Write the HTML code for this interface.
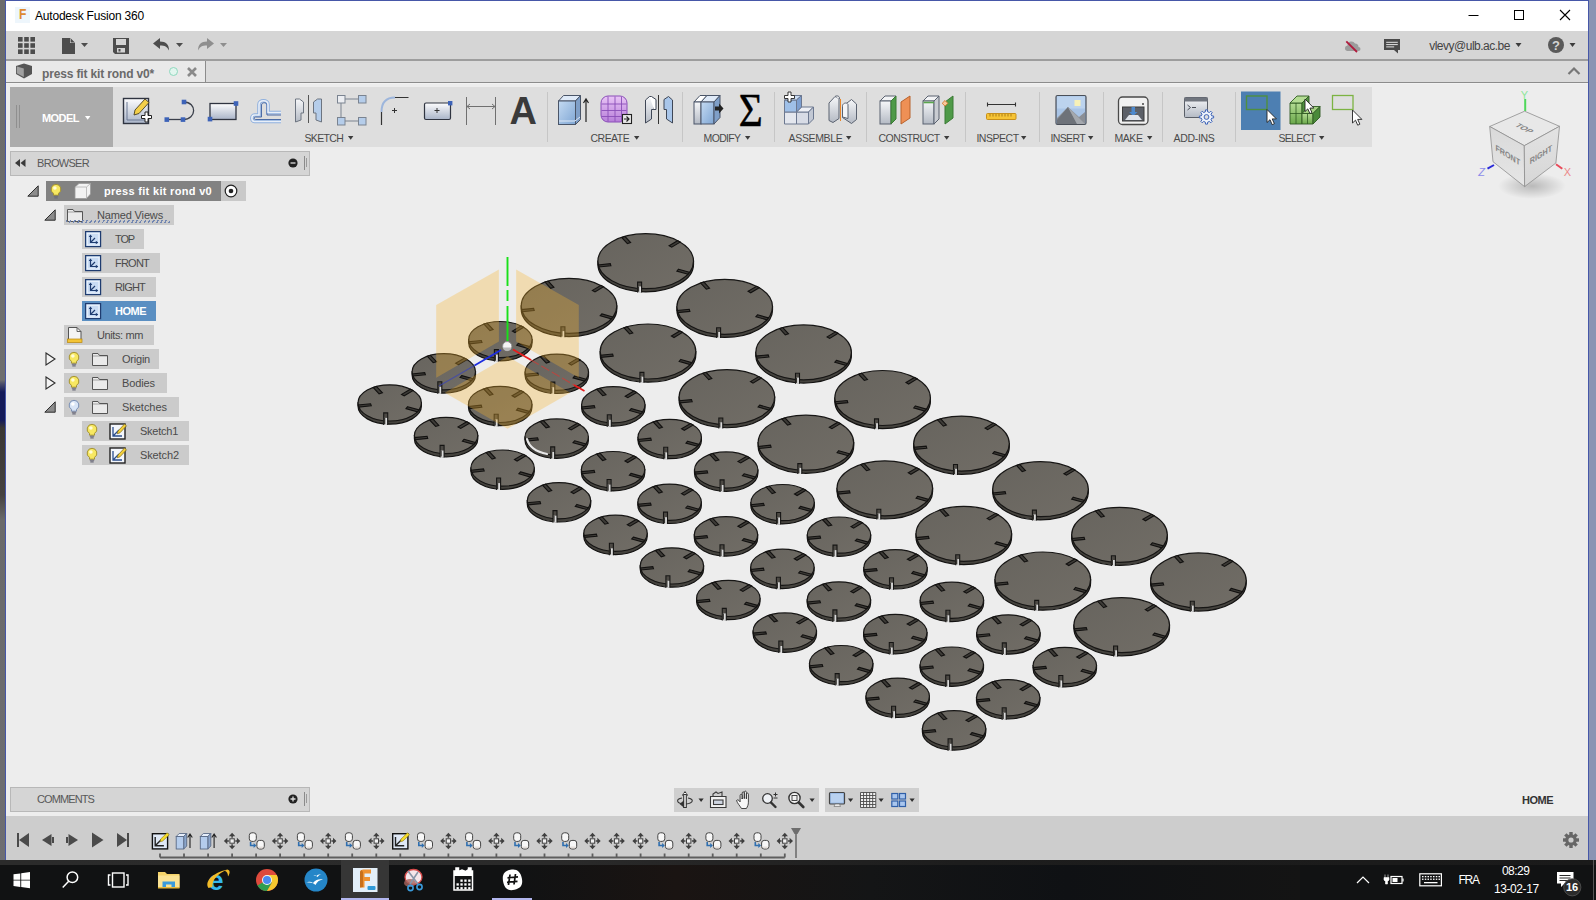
<!DOCTYPE html><html><head><meta charset="utf-8"><title>Autodesk Fusion 360</title><style>
*{margin:0;padding:0;box-sizing:border-box}
html,body{width:1596px;height:900px;overflow:hidden}
body{background:#6f6f6f;font-family:"Liberation Sans",sans-serif;position:relative}
.a{position:absolute}
.t{position:absolute;white-space:nowrap;line-height:1}
svg{position:absolute;overflow:visible}
</style></head><body>
<div class="a" style="left:0;top:0;width:5px;height:860px;background:linear-gradient(#6b6b6b 0,#6f6f6f 380px,#4a4d6a 384px,#141a5a 392px,#141a5a 420px,#3a3734 428px,#454240 495px,#6a6a6a 520px,#6e6e72 860px)"></div>
<div class="a" style="left:1589px;top:0;width:7px;height:860px;background:#8a94b3"></div>
<div class="a" style="left:5px;top:0;width:1584px;height:860px;background:#ededed;border:1px solid #4657a8;border-bottom:none"></div>
<div class="a" style="left:6px;top:1px;width:1582px;height:30px;background:#fff"></div>
<div class="t" style="left:35px;top:10px;font-size:12px;color:#000;letter-spacing:-0.2px">Autodesk Fusion 360</div>
<div class="a" style="left:15px;top:7px;width:15px;height:16px;background:#eef6fc"></div>
<div class="t" style="left:18.500px;top:6px;font-size:15.500px;font-weight:bold;color:#dd8a30;transform:scaleX(0.78);transform-origin:0 0">F</div>
<svg style="left:1460px;top:5px" width="120" height="22"><path d="M8.5 10.5h10" stroke="#000" fill="none"/><rect x="54.5" y="5.5" width="9" height="9" stroke="#000" fill="none"/><path d="M100 5l10 10M110 5l-10 10" stroke="#000" stroke-width="1.1" fill="none"/></svg>
<div class="a" style="left:6px;top:31px;width:1582px;height:28px;background:#d5d5d5"></div>
<div class="a" style="left:6px;top:59px;width:1582px;height:2px;background:#9d9d9d"></div>
<svg style="left:18px;top:37px" width="18" height="18" fill="#4d4d4d"><rect x="0.0" y="0.0" width="4.6" height="4.6"/><rect x="0.0" y="6.2" width="4.6" height="4.6"/><rect x="0.0" y="12.4" width="4.6" height="4.6"/><rect x="6.2" y="0.0" width="4.6" height="4.6"/><rect x="6.2" y="6.2" width="4.6" height="4.6"/><rect x="6.2" y="12.4" width="4.6" height="4.6"/><rect x="12.4" y="0.0" width="4.6" height="4.6"/><rect x="12.4" y="6.2" width="4.6" height="4.6"/><rect x="12.4" y="12.4" width="4.6" height="4.6"/></svg>
<svg style="left:62px;top:37px" width="30" height="18" fill="#4d4d4d"><path d="M0 1h8l5 5v11H0z"/><path d="M8 1v5h5" fill="#d5d5d5"/><path d="M8.6 1.2l4.2 4.4h-4.2z" fill="#4d4d4d"/><path d="M19 6h7l-3.5 4z"/></svg>
<svg style="left:113px;top:38px" width="17" height="17"><path d="M0 0h16v16H2l-2-2z" fill="#4d4d4d"/><rect x="3" y="1" width="10" height="6" fill="#d5d5d5"/><rect x="4" y="10" width="8" height="4.5" fill="#d5d5d5"/><rect x="5.5" y="11" width="2" height="2.5" fill="#4d4d4d"/></svg>
<svg style="left:152px;top:37px" width="34" height="18" fill="#4d4d4d"><path d="M1 6.5l7-5.5v3.5c6 0 9 3 9 9c-2-4-4-5-9-5v3.500z"/><path d="M24 6h7l-3.500 4z"/></svg>
<svg style="left:196px;top:37px" width="34" height="18" fill="#8e8e8e"><path d="M18 6.5l-7-5.5v3.5c-6 0-9 3-9 9c2-4 4-5 9-5v3.500z"/><path d="M24 6h7l-3.500 4z"/></svg>
<svg style="left:1342px;top:37px" width="22" height="18"><path d="M5 14a2.800 2.800 0 0 1 0.500-5.500a4 4 0 0 1 7.500-2a3.500 3.500 0 0 1 3.500 3.500a2 2 0 0 1 0 4z" fill="#9c9c9c"/><path d="M4.300 4.300l10.700 10.700" stroke="#b01a3c" stroke-width="1.800"/></svg>
<svg style="left:1384px;top:39px" width="17" height="16"><path d="M0 0h16v11h-2v3.500l-4-3.500h-10z" fill="#4a4a4a"/><path d="M2.200 3.300h11.600M2.200 5.600h11.600M2.200 7.900h8" stroke="#e4e4e4" stroke-width="1"/></svg>
<div class="t" style="left:1429.2px;top:40px;font-size:12px;color:#444;letter-spacing:-0.50px;">vlevy@ulb.ac.be</div>
<svg style="left:1515px;top:42px" width="10" height="8"><path d="M0.500 1h6l-3 4z" fill="#3c3c3c"/></svg>
<div class="a" style="left:1548px;top:37px;width:16px;height:16px;border-radius:8px;background:#5a5a5a"></div>
<div class="t" style="left:1552px;top:39px;font-size:13px;font-weight:bold;color:#d5d5d5">?</div>
<svg style="left:1568.500px;top:42px" width="10" height="8"><path d="M0.500 1h6l-3 4z" fill="#3c3c3c"/></svg>
<div class="a" style="left:6px;top:61px;width:1582px;height:22px;background:#dbdbdb"></div>
<div class="a" style="left:6px;top:82px;width:1582px;height:1px;background:#8c8c8c"></div>
<div class="a" style="left:6px;top:83px;width:1582px;height:1px;background:#f2f2f2"></div>
<div class="a" style="left:6px;top:61px;width:199px;height:21px;background:#e9e9e9"></div>
<div class="a" style="left:204.500px;top:61px;width:1.600px;height:21px;background:#8c8c8c"></div>
<svg style="left:16px;top:63px" width="17" height="17"><path d="M0 3l8-2.500 8 2.500v8l-8 4.500-8-4.500z" fill="#555"/><path d="M0.800 3.600l7 2v8.400l-7-3.800z" fill="#a0a0a0"/></svg>
<div class="t" style="left:42px;top:68px;font-size:12px;font-weight:bold;color:#6a6a6a;letter-spacing:-0.15px">press fit kit rond v0*</div>
<div class="a" style="left:169px;top:67px;width:9px;height:9px;border-radius:5px;border:1.500px solid #8fd8be;background:#e2f5ee"></div>
<svg style="left:187px;top:67px" width="10" height="10"><path d="M1 1l8 8M9 1l-8 8" stroke="#8a8a8a" stroke-width="2.600"/></svg>
<svg style="left:1567px;top:66px" width="14" height="10"><path d="M1.500 8l5.500-5.500 5.500 5.500" stroke="#777" stroke-width="2.200" fill="none"/></svg>
<svg style="left:0;top:0" width="1596" height="900" viewBox="0 0 1596 900">
<defs><linearGradient id="df" x1="0" y1="0" x2="1" y2="1"><stop offset="0" stop-color="#67645e"/><stop offset="1" stop-color="#716d66"/></linearGradient></defs>
<path d="M597.9 261.2v3.2a47.8 27.5 0 0 0 95.6 0v-3.2z" fill="#45433e" stroke="#131211" stroke-width="1.2"/><ellipse cx="645.7" cy="261.2" rx="47.8" ry="27.5" fill="url(#df)" stroke="#171615" stroke-width="1.2"/><path d="M678.5 269.2 L689.5 272.3 L687.9 274.2 L676.9 271.1z" fill="#3d3b37" stroke="#121110" stroke-width="1.1"/><path d="M610.9 265.8 L598.9 267.0 L598.3 264.9 L610.3 263.7z" fill="#3d3b37" stroke="#121110" stroke-width="1.1"/><path d="M627.4 243.6 L621.7 237.4 L624.9 236.4 L630.6 242.6z" fill="#3d3b37" stroke="#121110" stroke-width="1.1"/><path d="M669.1 245.7 L677.6 240.7 L680.2 242.1 L671.7 247.2z" fill="#3d3b37" stroke="#121110" stroke-width="1.1"/><path d="M637.6 292.5V282.1H641.6V292.5z" fill="#dcdcdc" stroke="none"/><path d="M637.6 286.4V282.1H641.6V286.4z" fill="#4c4944"/><path d="M637.6 292.5V282.1H641.6V292.5" fill="none" stroke="#151413" stroke-width="1.1"/><path d="M638.5 286.4V291.7" stroke="#34322e" stroke-width="1.4"/>
<path d="M676.9 306.8v3.2a47.8 27.5 0 0 0 95.6 0v-3.2z" fill="#45433e" stroke="#131211" stroke-width="1.2"/><ellipse cx="724.7" cy="306.8" rx="47.8" ry="27.5" fill="url(#df)" stroke="#171615" stroke-width="1.2"/><path d="M757.5 314.8 L768.4 317.9 L766.8 319.8 L755.9 316.7z" fill="#3d3b37" stroke="#121110" stroke-width="1.1"/><path d="M689.9 311.4 L677.9 312.6 L677.3 310.5 L689.3 309.3z" fill="#3d3b37" stroke="#121110" stroke-width="1.1"/><path d="M706.3 289.2 L700.6 283.0 L703.8 282.0 L709.5 288.2z" fill="#3d3b37" stroke="#121110" stroke-width="1.1"/><path d="M748.1 291.3 L756.6 286.3 L759.2 287.7 L750.7 292.8z" fill="#3d3b37" stroke="#121110" stroke-width="1.1"/><path d="M716.6 338.1V327.7H720.6V338.1z" fill="#dcdcdc" stroke="none"/><path d="M716.6 332.0V327.7H720.6V332.0z" fill="#4c4944"/><path d="M716.6 338.1V327.7H720.6V338.1" fill="none" stroke="#151413" stroke-width="1.1"/><path d="M717.5 332.0V337.3" stroke="#34322e" stroke-width="1.4"/>
<path d="M755.8 352.4v3.2a47.8 27.5 0 0 0 95.6 0v-3.2z" fill="#45433e" stroke="#131211" stroke-width="1.2"/><ellipse cx="803.6" cy="352.4" rx="47.8" ry="27.5" fill="url(#df)" stroke="#171615" stroke-width="1.2"/><path d="M836.4 360.4 L847.4 363.5 L845.8 365.4 L834.8 362.3z" fill="#3d3b37" stroke="#121110" stroke-width="1.1"/><path d="M768.9 357.0 L756.9 358.2 L756.2 356.1 L768.2 354.9z" fill="#3d3b37" stroke="#121110" stroke-width="1.1"/><path d="M785.3 334.8 L779.6 328.6 L782.8 327.6 L788.5 333.8z" fill="#3d3b37" stroke="#121110" stroke-width="1.1"/><path d="M827.1 336.9 L835.5 331.9 L838.1 333.3 L829.7 338.4z" fill="#3d3b37" stroke="#121110" stroke-width="1.1"/><path d="M795.5 383.7V373.3H799.5V383.7z" fill="#dcdcdc" stroke="none"/><path d="M795.5 377.6V373.3H799.5V377.6z" fill="#4c4944"/><path d="M795.5 383.7V373.3H799.5V383.7" fill="none" stroke="#151413" stroke-width="1.1"/><path d="M796.4 377.6V382.9" stroke="#34322e" stroke-width="1.4"/>
<path d="M834.8 398.0v3.2a47.8 27.5 0 0 0 95.6 0v-3.2z" fill="#45433e" stroke="#131211" stroke-width="1.2"/><ellipse cx="882.6" cy="398.0" rx="47.8" ry="27.5" fill="url(#df)" stroke="#171615" stroke-width="1.2"/><path d="M915.4 406.0 L926.3 409.1 L924.7 411.0 L913.8 407.9z" fill="#3d3b37" stroke="#121110" stroke-width="1.1"/><path d="M847.8 402.6 L835.8 403.8 L835.2 401.7 L847.2 400.5z" fill="#3d3b37" stroke="#121110" stroke-width="1.1"/><path d="M864.3 380.4 L858.5 374.2 L861.7 373.2 L867.5 379.4z" fill="#3d3b37" stroke="#121110" stroke-width="1.1"/><path d="M906.0 382.5 L914.5 377.5 L917.1 378.9 L908.6 384.0z" fill="#3d3b37" stroke="#121110" stroke-width="1.1"/><path d="M874.5 429.3V418.9H878.5V429.3z" fill="#dcdcdc" stroke="none"/><path d="M874.5 423.2V418.9H878.5V423.2z" fill="#4c4944"/><path d="M874.5 429.3V418.9H878.5V429.3" fill="none" stroke="#151413" stroke-width="1.1"/><path d="M875.4 423.2V428.5" stroke="#34322e" stroke-width="1.4"/>
<path d="M913.7 443.6v3.2a47.8 27.5 0 0 0 95.6 0v-3.2z" fill="#45433e" stroke="#131211" stroke-width="1.2"/><ellipse cx="961.5" cy="443.6" rx="47.8" ry="27.5" fill="url(#df)" stroke="#171615" stroke-width="1.2"/><path d="M994.3 451.6 L1005.3 454.7 L1003.7 456.6 L992.8 453.5z" fill="#3d3b37" stroke="#121110" stroke-width="1.1"/><path d="M926.8 448.2 L914.8 449.4 L914.2 447.3 L926.2 446.1z" fill="#3d3b37" stroke="#121110" stroke-width="1.1"/><path d="M943.2 426.0 L937.5 419.8 L940.7 418.8 L946.4 425.0z" fill="#3d3b37" stroke="#121110" stroke-width="1.1"/><path d="M985.0 428.1 L993.4 423.1 L996.1 424.5 L987.6 429.6z" fill="#3d3b37" stroke="#121110" stroke-width="1.1"/><path d="M953.5 474.9V464.5H957.5V474.9z" fill="#dcdcdc" stroke="none"/><path d="M953.5 468.8V464.5H957.5V468.8z" fill="#4c4944"/><path d="M953.5 474.9V464.5H957.5V474.9" fill="none" stroke="#151413" stroke-width="1.1"/><path d="M954.4 468.8V474.1" stroke="#34322e" stroke-width="1.4"/>
<path d="M992.7 489.2v3.2a47.8 27.5 0 0 0 95.6 0v-3.2z" fill="#45433e" stroke="#131211" stroke-width="1.2"/><ellipse cx="1040.5" cy="489.2" rx="47.8" ry="27.5" fill="url(#df)" stroke="#171615" stroke-width="1.2"/><path d="M1073.3 497.2 L1084.3 500.3 L1082.7 502.2 L1071.7 499.1z" fill="#3d3b37" stroke="#121110" stroke-width="1.1"/><path d="M1005.7 493.8 L993.7 495.0 L993.1 492.9 L1005.1 491.7z" fill="#3d3b37" stroke="#121110" stroke-width="1.1"/><path d="M1022.2 471.6 L1016.5 465.4 L1019.7 464.4 L1025.4 470.6z" fill="#3d3b37" stroke="#121110" stroke-width="1.1"/><path d="M1063.9 473.7 L1072.4 468.7 L1075.0 470.1 L1066.5 475.2z" fill="#3d3b37" stroke="#121110" stroke-width="1.1"/><path d="M1032.4 520.5V510.1H1036.4V520.5z" fill="#dcdcdc" stroke="none"/><path d="M1032.4 514.4V510.1H1036.4V514.4z" fill="#4c4944"/><path d="M1032.4 520.5V510.1H1036.4V520.5" fill="none" stroke="#151413" stroke-width="1.1"/><path d="M1033.3 514.4V519.7" stroke="#34322e" stroke-width="1.4"/>
<path d="M1071.7 534.8v3.2a47.8 27.5 0 0 0 95.6 0v-3.2z" fill="#45433e" stroke="#131211" stroke-width="1.2"/><ellipse cx="1119.5" cy="534.8" rx="47.8" ry="27.5" fill="url(#df)" stroke="#171615" stroke-width="1.2"/><path d="M1152.3 542.8 L1163.2 545.9 L1161.6 547.8 L1150.7 544.7z" fill="#3d3b37" stroke="#121110" stroke-width="1.1"/><path d="M1084.7 539.4 L1072.7 540.6 L1072.1 538.5 L1084.1 537.3z" fill="#3d3b37" stroke="#121110" stroke-width="1.1"/><path d="M1101.1 517.2 L1095.4 511.0 L1098.6 510.0 L1104.3 516.2z" fill="#3d3b37" stroke="#121110" stroke-width="1.1"/><path d="M1142.9 519.3 L1151.4 514.3 L1154.0 515.7 L1145.5 520.8z" fill="#3d3b37" stroke="#121110" stroke-width="1.1"/><path d="M1111.4 566.1V555.7H1115.4V566.1z" fill="#dcdcdc" stroke="none"/><path d="M1111.4 560.0V555.7H1115.4V560.0z" fill="#4c4944"/><path d="M1111.4 566.1V555.7H1115.4V566.1" fill="none" stroke="#151413" stroke-width="1.1"/><path d="M1112.3 560.0V565.3" stroke="#34322e" stroke-width="1.4"/>
<path d="M1150.6 580.4v3.2a47.8 27.5 0 0 0 95.6 0v-3.2z" fill="#45433e" stroke="#131211" stroke-width="1.2"/><ellipse cx="1198.4" cy="580.4" rx="47.8" ry="27.5" fill="url(#df)" stroke="#171615" stroke-width="1.2"/><path d="M1231.2 588.4 L1242.2 591.5 L1240.6 593.4 L1229.6 590.3z" fill="#3d3b37" stroke="#121110" stroke-width="1.1"/><path d="M1163.7 585.0 L1151.7 586.2 L1151.0 584.1 L1163.0 582.9z" fill="#3d3b37" stroke="#121110" stroke-width="1.1"/><path d="M1180.1 562.8 L1174.4 556.6 L1177.6 555.6 L1183.3 561.8z" fill="#3d3b37" stroke="#121110" stroke-width="1.1"/><path d="M1221.9 564.9 L1230.3 559.9 L1232.9 561.3 L1224.5 566.4z" fill="#3d3b37" stroke="#121110" stroke-width="1.1"/><path d="M1190.3 611.7V601.3H1194.3V611.7z" fill="#dcdcdc" stroke="none"/><path d="M1190.3 605.6V601.3H1194.3V605.6z" fill="#4c4944"/><path d="M1190.3 611.7V601.3H1194.3V611.7" fill="none" stroke="#151413" stroke-width="1.1"/><path d="M1191.2 605.6V610.9" stroke="#34322e" stroke-width="1.4"/>
<path d="M521.2 305.9v3.2a47.8 27.5 0 0 0 95.6 0v-3.2z" fill="#45433e" stroke="#131211" stroke-width="1.2"/><ellipse cx="569.0" cy="305.9" rx="47.8" ry="27.5" fill="url(#df)" stroke="#171615" stroke-width="1.2"/><path d="M601.8 313.9 L612.8 317.0 L611.2 318.9 L600.2 315.8z" fill="#3d3b37" stroke="#121110" stroke-width="1.1"/><path d="M534.2 310.5 L522.2 311.7 L521.6 309.6 L533.6 308.4z" fill="#3d3b37" stroke="#121110" stroke-width="1.1"/><path d="M550.7 288.3 L545.0 282.1 L548.2 281.1 L553.9 287.3z" fill="#3d3b37" stroke="#121110" stroke-width="1.1"/><path d="M592.4 290.4 L600.9 285.4 L603.5 286.8 L595.0 291.9z" fill="#3d3b37" stroke="#121110" stroke-width="1.1"/><path d="M560.9 337.2V326.8H564.9V337.2z" fill="#dcdcdc" stroke="none"/><path d="M560.9 331.1V326.8H564.9V331.1z" fill="#4c4944"/><path d="M560.9 337.2V326.8H564.9V337.2" fill="none" stroke="#151413" stroke-width="1.1"/><path d="M561.8 331.1V336.4" stroke="#34322e" stroke-width="1.4"/>
<path d="M600.2 351.5v3.2a47.8 27.5 0 0 0 95.6 0v-3.2z" fill="#45433e" stroke="#131211" stroke-width="1.2"/><ellipse cx="648.0" cy="351.5" rx="47.8" ry="27.5" fill="url(#df)" stroke="#171615" stroke-width="1.2"/><path d="M680.8 359.5 L691.7 362.6 L690.1 364.5 L679.2 361.4z" fill="#3d3b37" stroke="#121110" stroke-width="1.1"/><path d="M613.2 356.1 L601.2 357.3 L600.6 355.2 L612.6 354.0z" fill="#3d3b37" stroke="#121110" stroke-width="1.1"/><path d="M629.6 333.9 L623.9 327.7 L627.1 326.7 L632.8 332.9z" fill="#3d3b37" stroke="#121110" stroke-width="1.1"/><path d="M671.4 336.0 L679.9 331.0 L682.5 332.4 L674.0 337.5z" fill="#3d3b37" stroke="#121110" stroke-width="1.1"/><path d="M639.9 382.8V372.4H643.9V382.8z" fill="#dcdcdc" stroke="none"/><path d="M639.9 376.7V372.4H643.9V376.7z" fill="#4c4944"/><path d="M639.9 382.8V372.4H643.9V382.8" fill="none" stroke="#151413" stroke-width="1.1"/><path d="M640.8 376.7V382.0" stroke="#34322e" stroke-width="1.4"/>
<path d="M679.1 397.1v3.2a47.8 27.5 0 0 0 95.6 0v-3.2z" fill="#45433e" stroke="#131211" stroke-width="1.2"/><ellipse cx="726.9" cy="397.1" rx="47.8" ry="27.5" fill="url(#df)" stroke="#171615" stroke-width="1.2"/><path d="M759.7 405.1 L770.7 408.2 L769.1 410.1 L758.1 407.0z" fill="#3d3b37" stroke="#121110" stroke-width="1.1"/><path d="M692.2 401.7 L680.2 402.9 L679.5 400.8 L691.5 399.6z" fill="#3d3b37" stroke="#121110" stroke-width="1.1"/><path d="M708.6 379.5 L702.9 373.3 L706.1 372.3 L711.8 378.5z" fill="#3d3b37" stroke="#121110" stroke-width="1.1"/><path d="M750.4 381.6 L758.8 376.6 L761.4 378.0 L753.0 383.1z" fill="#3d3b37" stroke="#121110" stroke-width="1.1"/><path d="M718.8 428.4V418.0H722.8V428.4z" fill="#dcdcdc" stroke="none"/><path d="M718.8 422.3V418.0H722.8V422.3z" fill="#4c4944"/><path d="M718.8 428.4V418.0H722.8V428.4" fill="none" stroke="#151413" stroke-width="1.1"/><path d="M719.7 422.3V427.6" stroke="#34322e" stroke-width="1.4"/>
<path d="M758.1 442.7v3.2a47.8 27.5 0 0 0 95.6 0v-3.2z" fill="#45433e" stroke="#131211" stroke-width="1.2"/><ellipse cx="805.9" cy="442.7" rx="47.8" ry="27.5" fill="url(#df)" stroke="#171615" stroke-width="1.2"/><path d="M838.7 450.7 L849.6 453.8 L848.0 455.7 L837.1 452.6z" fill="#3d3b37" stroke="#121110" stroke-width="1.1"/><path d="M771.1 447.3 L759.1 448.5 L758.5 446.4 L770.5 445.2z" fill="#3d3b37" stroke="#121110" stroke-width="1.1"/><path d="M787.6 425.1 L781.8 418.9 L785.0 417.9 L790.8 424.1z" fill="#3d3b37" stroke="#121110" stroke-width="1.1"/><path d="M829.3 427.2 L837.8 422.2 L840.4 423.6 L831.9 428.7z" fill="#3d3b37" stroke="#121110" stroke-width="1.1"/><path d="M797.8 474.0V463.6H801.8V474.0z" fill="#dcdcdc" stroke="none"/><path d="M797.8 467.9V463.6H801.8V467.9z" fill="#4c4944"/><path d="M797.8 474.0V463.6H801.8V474.0" fill="none" stroke="#151413" stroke-width="1.1"/><path d="M798.7 467.9V473.2" stroke="#34322e" stroke-width="1.4"/>
<path d="M837.0 488.3v3.2a47.8 27.5 0 0 0 95.6 0v-3.2z" fill="#45433e" stroke="#131211" stroke-width="1.2"/><ellipse cx="884.8" cy="488.3" rx="47.8" ry="27.5" fill="url(#df)" stroke="#171615" stroke-width="1.2"/><path d="M917.6 496.3 L928.6 499.4 L927.0 501.3 L916.1 498.2z" fill="#3d3b37" stroke="#121110" stroke-width="1.1"/><path d="M850.1 492.9 L838.1 494.1 L837.5 492.0 L849.5 490.8z" fill="#3d3b37" stroke="#121110" stroke-width="1.1"/><path d="M866.5 470.7 L860.8 464.5 L864.0 463.5 L869.7 469.7z" fill="#3d3b37" stroke="#121110" stroke-width="1.1"/><path d="M908.3 472.8 L916.7 467.8 L919.4 469.2 L910.9 474.3z" fill="#3d3b37" stroke="#121110" stroke-width="1.1"/><path d="M876.8 519.6V509.2H880.8V519.6z" fill="#dcdcdc" stroke="none"/><path d="M876.8 513.5V509.2H880.8V513.5z" fill="#4c4944"/><path d="M876.8 519.6V509.2H880.8V519.6" fill="none" stroke="#151413" stroke-width="1.1"/><path d="M877.7 513.5V518.8" stroke="#34322e" stroke-width="1.4"/>
<path d="M916.0 533.9v3.2a47.8 27.5 0 0 0 95.6 0v-3.2z" fill="#45433e" stroke="#131211" stroke-width="1.2"/><ellipse cx="963.8" cy="533.9" rx="47.8" ry="27.5" fill="url(#df)" stroke="#171615" stroke-width="1.2"/><path d="M996.6 541.9 L1007.6 545.0 L1006.0 546.9 L995.0 543.8z" fill="#3d3b37" stroke="#121110" stroke-width="1.1"/><path d="M929.0 538.5 L917.0 539.7 L916.4 537.6 L928.4 536.4z" fill="#3d3b37" stroke="#121110" stroke-width="1.1"/><path d="M945.5 516.3 L939.8 510.1 L943.0 509.1 L948.7 515.3z" fill="#3d3b37" stroke="#121110" stroke-width="1.1"/><path d="M987.2 518.4 L995.7 513.4 L998.3 514.8 L989.8 519.9z" fill="#3d3b37" stroke="#121110" stroke-width="1.1"/><path d="M955.7 565.2V554.8H959.7V565.2z" fill="#dcdcdc" stroke="none"/><path d="M955.7 559.1V554.8H959.7V559.1z" fill="#4c4944"/><path d="M955.7 565.2V554.8H959.7V565.2" fill="none" stroke="#151413" stroke-width="1.1"/><path d="M956.6 559.1V564.4" stroke="#34322e" stroke-width="1.4"/>
<path d="M995.0 579.5v3.2a47.8 27.5 0 0 0 95.6 0v-3.2z" fill="#45433e" stroke="#131211" stroke-width="1.2"/><ellipse cx="1042.8" cy="579.5" rx="47.8" ry="27.5" fill="url(#df)" stroke="#171615" stroke-width="1.2"/><path d="M1075.6 587.5 L1086.5 590.6 L1084.9 592.5 L1074.0 589.4z" fill="#3d3b37" stroke="#121110" stroke-width="1.1"/><path d="M1008.0 584.1 L996.0 585.3 L995.4 583.2 L1007.4 582.0z" fill="#3d3b37" stroke="#121110" stroke-width="1.1"/><path d="M1024.4 561.9 L1018.7 555.7 L1021.9 554.7 L1027.6 560.9z" fill="#3d3b37" stroke="#121110" stroke-width="1.1"/><path d="M1066.2 564.0 L1074.7 559.0 L1077.3 560.4 L1068.8 565.5z" fill="#3d3b37" stroke="#121110" stroke-width="1.1"/><path d="M1034.7 610.8V600.4H1038.7V610.8z" fill="#dcdcdc" stroke="none"/><path d="M1034.7 604.7V600.4H1038.7V604.7z" fill="#4c4944"/><path d="M1034.7 610.8V600.4H1038.7V610.8" fill="none" stroke="#151413" stroke-width="1.1"/><path d="M1035.6 604.7V610.0" stroke="#34322e" stroke-width="1.4"/>
<path d="M1073.9 625.1v3.2a47.8 27.5 0 0 0 95.6 0v-3.2z" fill="#45433e" stroke="#131211" stroke-width="1.2"/><ellipse cx="1121.7" cy="625.1" rx="47.8" ry="27.5" fill="url(#df)" stroke="#171615" stroke-width="1.2"/><path d="M1154.5 633.1 L1165.5 636.2 L1163.9 638.1 L1152.9 635.0z" fill="#3d3b37" stroke="#121110" stroke-width="1.1"/><path d="M1087.0 629.7 L1075.0 630.9 L1074.3 628.8 L1086.3 627.6z" fill="#3d3b37" stroke="#121110" stroke-width="1.1"/><path d="M1103.4 607.5 L1097.7 601.3 L1100.9 600.3 L1106.6 606.5z" fill="#3d3b37" stroke="#121110" stroke-width="1.1"/><path d="M1145.2 609.6 L1153.6 604.6 L1156.2 606.0 L1147.8 611.1z" fill="#3d3b37" stroke="#121110" stroke-width="1.1"/><path d="M1113.6 656.4V646.0H1117.6V656.4z" fill="#dcdcdc" stroke="none"/><path d="M1113.6 650.3V646.0H1117.6V650.3z" fill="#4c4944"/><path d="M1113.6 656.4V646.0H1117.6V656.4" fill="none" stroke="#151413" stroke-width="1.1"/><path d="M1114.5 650.3V655.6" stroke="#34322e" stroke-width="1.4"/>
<path d="M468.7 339.6v3.2a31.7 18.1 0 0 0 63.4 0v-3.2z" fill="#45433e" stroke="#131211" stroke-width="1.2"/><ellipse cx="500.4" cy="339.6" rx="31.7" ry="18.1" fill="url(#df)" stroke="#171615" stroke-width="1.2"/><path d="M518.3 343.4 L529.7 346.6 L528.1 348.5 L516.7 345.3z" fill="#3d3b37" stroke="#121110" stroke-width="1.1"/><path d="M482.0 342.5 L469.5 343.8 L468.9 341.7 L481.3 340.5z" fill="#3d3b37" stroke="#121110" stroke-width="1.1"/><path d="M489.8 330.5 L483.9 324.1 L487.1 323.1 L493.1 329.5z" fill="#3d3b37" stroke="#121110" stroke-width="1.1"/><path d="M512.3 331.1 L521.1 325.9 L523.7 327.3 L514.9 332.5z" fill="#3d3b37" stroke="#121110" stroke-width="1.1"/><path d="M494.4 361.6V349.6H498.4V361.6z" fill="#dcdcdc" stroke="none"/><path d="M494.4 354.6V349.6H498.4V354.6z" fill="#4c4944"/><path d="M494.4 361.6V349.6H498.4V361.6" fill="none" stroke="#151413" stroke-width="1.1"/><path d="M495.3 354.6V360.8" stroke="#34322e" stroke-width="1.4"/>
<path d="M525.1 372.2v3.2a31.7 18.1 0 0 0 63.4 0v-3.2z" fill="#45433e" stroke="#131211" stroke-width="1.2"/><ellipse cx="556.8" cy="372.2" rx="31.7" ry="18.1" fill="url(#df)" stroke="#171615" stroke-width="1.2"/><path d="M574.7 376.0 L586.1 379.2 L584.5 381.1 L573.1 377.9z" fill="#3d3b37" stroke="#121110" stroke-width="1.1"/><path d="M538.4 375.1 L525.9 376.4 L525.3 374.3 L537.8 373.0z" fill="#3d3b37" stroke="#121110" stroke-width="1.1"/><path d="M546.3 363.1 L540.3 356.7 L543.6 355.7 L549.5 362.1z" fill="#3d3b37" stroke="#121110" stroke-width="1.1"/><path d="M568.7 363.6 L577.5 358.4 L580.2 359.9 L571.4 365.1z" fill="#3d3b37" stroke="#121110" stroke-width="1.1"/><path d="M550.8 394.1V382.1H554.8V394.1z" fill="#dcdcdc" stroke="none"/><path d="M550.8 387.2V382.1H554.8V387.2z" fill="#4c4944"/><path d="M550.8 394.1V382.1H554.8V394.1" fill="none" stroke="#151413" stroke-width="1.1"/><path d="M551.7 387.2V393.3" stroke="#34322e" stroke-width="1.4"/>
<path d="M581.6 404.8v3.2a31.7 18.1 0 0 0 63.4 0v-3.2z" fill="#45433e" stroke="#131211" stroke-width="1.2"/><ellipse cx="613.3" cy="404.8" rx="31.7" ry="18.1" fill="url(#df)" stroke="#171615" stroke-width="1.2"/><path d="M631.2 408.6 L642.6 411.8 L641.0 413.7 L629.6 410.5z" fill="#3d3b37" stroke="#121110" stroke-width="1.1"/><path d="M594.9 407.7 L582.4 409.0 L581.7 406.9 L594.2 405.6z" fill="#3d3b37" stroke="#121110" stroke-width="1.1"/><path d="M602.7 395.7 L596.8 389.3 L600.0 388.3 L606.0 394.7z" fill="#3d3b37" stroke="#121110" stroke-width="1.1"/><path d="M625.2 396.2 L634.0 391.0 L636.6 392.5 L627.8 397.7z" fill="#3d3b37" stroke="#121110" stroke-width="1.1"/><path d="M607.3 426.7V414.7H611.3V426.7z" fill="#dcdcdc" stroke="none"/><path d="M607.3 419.8V414.7H611.3V419.8z" fill="#4c4944"/><path d="M607.3 426.7V414.7H611.3V426.7" fill="none" stroke="#151413" stroke-width="1.1"/><path d="M608.2 419.8V425.9" stroke="#34322e" stroke-width="1.4"/>
<path d="M638.0 437.4v3.2a31.7 18.1 0 0 0 63.4 0v-3.2z" fill="#45433e" stroke="#131211" stroke-width="1.2"/><ellipse cx="669.7" cy="437.4" rx="31.7" ry="18.1" fill="url(#df)" stroke="#171615" stroke-width="1.2"/><path d="M687.6 441.2 L699.0 444.4 L697.4 446.2 L686.0 443.1z" fill="#3d3b37" stroke="#121110" stroke-width="1.1"/><path d="M651.3 440.3 L638.8 441.5 L638.2 439.5 L650.7 438.2z" fill="#3d3b37" stroke="#121110" stroke-width="1.1"/><path d="M659.2 428.3 L653.2 421.9 L656.5 420.9 L662.4 427.3z" fill="#3d3b37" stroke="#121110" stroke-width="1.1"/><path d="M681.6 428.8 L690.4 423.6 L693.1 425.1 L684.3 430.3z" fill="#3d3b37" stroke="#121110" stroke-width="1.1"/><path d="M663.7 459.3V447.3H667.7V459.3z" fill="#dcdcdc" stroke="none"/><path d="M663.7 452.4V447.3H667.7V452.4z" fill="#4c4944"/><path d="M663.7 459.3V447.3H667.7V459.3" fill="none" stroke="#151413" stroke-width="1.1"/><path d="M664.6 452.4V458.5" stroke="#34322e" stroke-width="1.4"/>
<path d="M694.5 470.0v3.2a31.7 18.1 0 0 0 63.4 0v-3.2z" fill="#45433e" stroke="#131211" stroke-width="1.2"/><ellipse cx="726.2" cy="470.0" rx="31.7" ry="18.1" fill="url(#df)" stroke="#171615" stroke-width="1.2"/><path d="M744.1 473.8 L755.5 477.0 L753.8 478.8 L742.4 475.7z" fill="#3d3b37" stroke="#121110" stroke-width="1.1"/><path d="M707.7 472.9 L695.3 474.1 L694.6 472.1 L707.1 470.8z" fill="#3d3b37" stroke="#121110" stroke-width="1.1"/><path d="M715.6 460.9 L709.7 454.5 L712.9 453.5 L718.9 459.9z" fill="#3d3b37" stroke="#121110" stroke-width="1.1"/><path d="M738.0 461.4 L746.9 456.2 L749.5 457.7 L740.7 462.9z" fill="#3d3b37" stroke="#121110" stroke-width="1.1"/><path d="M720.1 491.9V479.9H724.1V491.9z" fill="#dcdcdc" stroke="none"/><path d="M720.1 485.0V479.9H724.1V485.0z" fill="#4c4944"/><path d="M720.1 491.9V479.9H724.1V491.9" fill="none" stroke="#151413" stroke-width="1.1"/><path d="M721.0 485.0V491.1" stroke="#34322e" stroke-width="1.4"/>
<path d="M750.9 502.6v3.2a31.7 18.1 0 0 0 63.4 0v-3.2z" fill="#45433e" stroke="#131211" stroke-width="1.2"/><ellipse cx="782.6" cy="502.6" rx="31.7" ry="18.1" fill="url(#df)" stroke="#171615" stroke-width="1.2"/><path d="M800.5 506.4 L811.9 509.5 L810.3 511.4 L798.9 508.3z" fill="#3d3b37" stroke="#121110" stroke-width="1.1"/><path d="M764.2 505.5 L751.7 506.7 L751.1 504.7 L763.5 503.4z" fill="#3d3b37" stroke="#121110" stroke-width="1.1"/><path d="M772.0 493.5 L766.1 487.1 L769.3 486.1 L775.3 492.5z" fill="#3d3b37" stroke="#121110" stroke-width="1.1"/><path d="M794.5 494.0 L803.3 488.8 L805.9 490.3 L797.1 495.5z" fill="#3d3b37" stroke="#121110" stroke-width="1.1"/><path d="M776.6 524.5V512.5H780.6V524.5z" fill="#dcdcdc" stroke="none"/><path d="M776.6 517.5V512.5H780.6V517.5z" fill="#4c4944"/><path d="M776.6 524.5V512.5H780.6V524.5" fill="none" stroke="#151413" stroke-width="1.1"/><path d="M777.5 517.5V523.7" stroke="#34322e" stroke-width="1.4"/>
<path d="M807.3 535.1v3.2a31.7 18.1 0 0 0 63.4 0v-3.2z" fill="#45433e" stroke="#131211" stroke-width="1.2"/><ellipse cx="839.0" cy="535.1" rx="31.7" ry="18.1" fill="url(#df)" stroke="#171615" stroke-width="1.2"/><path d="M856.9 539.0 L868.3 542.1 L866.7 544.0 L855.3 540.8z" fill="#3d3b37" stroke="#121110" stroke-width="1.1"/><path d="M820.6 538.1 L808.1 539.3 L807.5 537.2 L820.0 536.0z" fill="#3d3b37" stroke="#121110" stroke-width="1.1"/><path d="M828.5 526.0 L822.5 519.7 L825.8 518.7 L831.7 525.1z" fill="#3d3b37" stroke="#121110" stroke-width="1.1"/><path d="M850.9 526.6 L859.7 521.4 L862.4 522.8 L853.6 528.1z" fill="#3d3b37" stroke="#121110" stroke-width="1.1"/><path d="M833.0 557.1V545.1H837.0V557.1z" fill="#dcdcdc" stroke="none"/><path d="M833.0 550.1V545.1H837.0V550.1z" fill="#4c4944"/><path d="M833.0 557.1V545.1H837.0V557.1" fill="none" stroke="#151413" stroke-width="1.1"/><path d="M833.9 550.1V556.3" stroke="#34322e" stroke-width="1.4"/>
<path d="M863.8 567.7v3.2a31.7 18.1 0 0 0 63.4 0v-3.2z" fill="#45433e" stroke="#131211" stroke-width="1.2"/><ellipse cx="895.5" cy="567.7" rx="31.7" ry="18.1" fill="url(#df)" stroke="#171615" stroke-width="1.2"/><path d="M913.4 571.5 L924.8 574.7 L923.2 576.6 L911.8 573.4z" fill="#3d3b37" stroke="#121110" stroke-width="1.1"/><path d="M877.1 570.6 L864.6 571.9 L863.9 569.8 L876.4 568.6z" fill="#3d3b37" stroke="#121110" stroke-width="1.1"/><path d="M884.9 558.6 L879.0 552.2 L882.2 551.3 L888.2 557.6z" fill="#3d3b37" stroke="#121110" stroke-width="1.1"/><path d="M907.4 559.2 L916.2 554.0 L918.8 555.4 L910.0 560.6z" fill="#3d3b37" stroke="#121110" stroke-width="1.1"/><path d="M889.5 589.7V577.7H893.5V589.7z" fill="#dcdcdc" stroke="none"/><path d="M889.5 582.7V577.7H893.5V582.7z" fill="#4c4944"/><path d="M889.5 589.7V577.7H893.5V589.7" fill="none" stroke="#151413" stroke-width="1.1"/><path d="M890.4 582.7V588.9" stroke="#34322e" stroke-width="1.4"/>
<path d="M920.2 600.3v3.2a31.7 18.1 0 0 0 63.4 0v-3.2z" fill="#45433e" stroke="#131211" stroke-width="1.2"/><ellipse cx="951.9" cy="600.3" rx="31.7" ry="18.1" fill="url(#df)" stroke="#171615" stroke-width="1.2"/><path d="M969.8 604.1 L981.2 607.3 L979.6 609.2 L968.2 606.0z" fill="#3d3b37" stroke="#121110" stroke-width="1.1"/><path d="M933.5 603.2 L921.0 604.5 L920.4 602.4 L932.9 601.2z" fill="#3d3b37" stroke="#121110" stroke-width="1.1"/><path d="M941.4 591.2 L935.4 584.8 L938.7 583.8 L944.6 590.2z" fill="#3d3b37" stroke="#121110" stroke-width="1.1"/><path d="M963.8 591.8 L972.6 586.6 L975.3 588.0 L966.5 593.2z" fill="#3d3b37" stroke="#121110" stroke-width="1.1"/><path d="M945.9 622.3V610.3H949.9V622.3z" fill="#dcdcdc" stroke="none"/><path d="M945.9 615.3V610.3H949.9V615.3z" fill="#4c4944"/><path d="M945.9 622.3V610.3H949.9V622.3" fill="none" stroke="#151413" stroke-width="1.1"/><path d="M946.8 615.3V621.5" stroke="#34322e" stroke-width="1.4"/>
<path d="M976.7 632.9v3.2a31.7 18.1 0 0 0 63.4 0v-3.2z" fill="#45433e" stroke="#131211" stroke-width="1.2"/><ellipse cx="1008.4" cy="632.9" rx="31.7" ry="18.1" fill="url(#df)" stroke="#171615" stroke-width="1.2"/><path d="M1026.3 636.7 L1037.7 639.9 L1036.0 641.8 L1024.6 638.6z" fill="#3d3b37" stroke="#121110" stroke-width="1.1"/><path d="M989.9 635.8 L977.5 637.1 L976.8 635.0 L989.3 633.8z" fill="#3d3b37" stroke="#121110" stroke-width="1.1"/><path d="M997.8 623.8 L991.9 617.4 L995.1 616.4 L1001.1 622.8z" fill="#3d3b37" stroke="#121110" stroke-width="1.1"/><path d="M1020.2 624.4 L1029.1 619.2 L1031.7 620.6 L1022.9 625.8z" fill="#3d3b37" stroke="#121110" stroke-width="1.1"/><path d="M1002.3 654.9V642.9H1006.3V654.9z" fill="#dcdcdc" stroke="none"/><path d="M1002.3 647.9V642.9H1006.3V647.9z" fill="#4c4944"/><path d="M1002.3 654.9V642.9H1006.3V654.9" fill="none" stroke="#151413" stroke-width="1.1"/><path d="M1003.2 647.9V654.1" stroke="#34322e" stroke-width="1.4"/>
<path d="M1033.1 665.5v3.2a31.7 18.1 0 0 0 63.4 0v-3.2z" fill="#45433e" stroke="#131211" stroke-width="1.2"/><ellipse cx="1064.8" cy="665.5" rx="31.7" ry="18.1" fill="url(#df)" stroke="#171615" stroke-width="1.2"/><path d="M1082.7 669.3 L1094.1 672.5 L1092.5 674.4 L1081.1 671.2z" fill="#3d3b37" stroke="#121110" stroke-width="1.1"/><path d="M1046.4 668.4 L1033.9 669.7 L1033.3 667.6 L1045.7 666.4z" fill="#3d3b37" stroke="#121110" stroke-width="1.1"/><path d="M1054.2 656.4 L1048.3 650.0 L1051.5 649.0 L1057.5 655.4z" fill="#3d3b37" stroke="#121110" stroke-width="1.1"/><path d="M1076.7 657.0 L1085.5 651.8 L1088.1 653.2 L1079.3 658.4z" fill="#3d3b37" stroke="#121110" stroke-width="1.1"/><path d="M1058.8 687.5V675.5H1062.8V687.5z" fill="#dcdcdc" stroke="none"/><path d="M1058.8 680.5V675.5H1062.8V680.5z" fill="#4c4944"/><path d="M1058.8 687.5V675.5H1062.8V687.5" fill="none" stroke="#151413" stroke-width="1.1"/><path d="M1059.7 680.5V686.7" stroke="#34322e" stroke-width="1.4"/>
<path d="M412.1 371.8v3.2a31.7 18.1 0 0 0 63.4 0v-3.2z" fill="#45433e" stroke="#131211" stroke-width="1.2"/><ellipse cx="443.8" cy="371.8" rx="31.7" ry="18.1" fill="url(#df)" stroke="#171615" stroke-width="1.2"/><path d="M461.7 375.6 L473.1 378.8 L471.5 380.7 L460.1 377.5z" fill="#3d3b37" stroke="#121110" stroke-width="1.1"/><path d="M425.4 374.7 L412.9 376.0 L412.3 373.9 L424.7 372.7z" fill="#3d3b37" stroke="#121110" stroke-width="1.1"/><path d="M433.2 362.7 L427.3 356.3 L430.5 355.3 L436.5 361.7z" fill="#3d3b37" stroke="#121110" stroke-width="1.1"/><path d="M455.7 363.3 L464.5 358.1 L467.1 359.5 L458.3 364.7z" fill="#3d3b37" stroke="#121110" stroke-width="1.1"/><path d="M437.8 393.8V381.8H441.8V393.8z" fill="#dcdcdc" stroke="none"/><path d="M437.8 386.8V381.8H441.8V386.8z" fill="#4c4944"/><path d="M437.8 393.8V381.8H441.8V393.8" fill="none" stroke="#151413" stroke-width="1.1"/><path d="M438.7 386.8V393.0" stroke="#34322e" stroke-width="1.4"/>
<path d="M468.5 404.4v3.2a31.7 18.1 0 0 0 63.4 0v-3.2z" fill="#45433e" stroke="#131211" stroke-width="1.2"/><ellipse cx="500.2" cy="404.4" rx="31.7" ry="18.1" fill="url(#df)" stroke="#171615" stroke-width="1.2"/><path d="M518.1 408.2 L529.5 411.4 L527.9 413.3 L516.5 410.1z" fill="#3d3b37" stroke="#121110" stroke-width="1.1"/><path d="M481.8 407.3 L469.3 408.6 L468.7 406.5 L481.2 405.2z" fill="#3d3b37" stroke="#121110" stroke-width="1.1"/><path d="M489.7 395.3 L483.7 388.9 L487.0 387.9 L492.9 394.3z" fill="#3d3b37" stroke="#121110" stroke-width="1.1"/><path d="M512.1 395.8 L520.9 390.6 L523.6 392.1 L514.8 397.3z" fill="#3d3b37" stroke="#121110" stroke-width="1.1"/><path d="M494.2 426.3V414.3H498.2V426.3z" fill="#dcdcdc" stroke="none"/><path d="M494.2 419.4V414.3H498.2V419.4z" fill="#4c4944"/><path d="M494.2 426.3V414.3H498.2V426.3" fill="none" stroke="#151413" stroke-width="1.1"/><path d="M495.1 419.4V425.5" stroke="#34322e" stroke-width="1.4"/>
<path d="M525.0 437.0v3.2a31.7 18.1 0 0 0 63.4 0v-3.2z" fill="#45433e" stroke="#131211" stroke-width="1.2"/><ellipse cx="556.7" cy="437.0" rx="31.7" ry="18.1" fill="url(#df)" stroke="#171615" stroke-width="1.2"/><path d="M574.6 440.8 L586.0 444.0 L584.4 445.9 L573.0 442.7z" fill="#3d3b37" stroke="#121110" stroke-width="1.1"/><path d="M538.3 439.9 L525.8 441.2 L525.1 439.1 L537.6 437.8z" fill="#3d3b37" stroke="#121110" stroke-width="1.1"/><path d="M546.1 427.9 L540.2 421.5 L543.4 420.5 L549.4 426.9z" fill="#3d3b37" stroke="#121110" stroke-width="1.1"/><path d="M568.6 428.4 L577.4 423.2 L580.0 424.7 L571.2 429.9z" fill="#3d3b37" stroke="#121110" stroke-width="1.1"/><path d="M550.7 458.9V446.9H554.7V458.9z" fill="#dcdcdc" stroke="none"/><path d="M550.7 452.0V446.9H554.7V452.0z" fill="#4c4944"/><path d="M550.7 458.9V446.9H554.7V458.9" fill="none" stroke="#151413" stroke-width="1.1"/><path d="M551.6 452.0V458.1" stroke="#34322e" stroke-width="1.4"/>
<path d="M581.4 469.6v3.2a31.7 18.1 0 0 0 63.4 0v-3.2z" fill="#45433e" stroke="#131211" stroke-width="1.2"/><ellipse cx="613.1" cy="469.6" rx="31.7" ry="18.1" fill="url(#df)" stroke="#171615" stroke-width="1.2"/><path d="M631.0 473.4 L642.4 476.6 L640.8 478.4 L629.4 475.3z" fill="#3d3b37" stroke="#121110" stroke-width="1.1"/><path d="M594.7 472.5 L582.2 473.7 L581.6 471.7 L594.1 470.4z" fill="#3d3b37" stroke="#121110" stroke-width="1.1"/><path d="M602.6 460.5 L596.6 454.1 L599.9 453.1 L605.8 459.5z" fill="#3d3b37" stroke="#121110" stroke-width="1.1"/><path d="M625.0 461.0 L633.8 455.8 L636.5 457.3 L627.7 462.5z" fill="#3d3b37" stroke="#121110" stroke-width="1.1"/><path d="M607.1 491.5V479.5H611.1V491.5z" fill="#dcdcdc" stroke="none"/><path d="M607.1 484.6V479.5H611.1V484.6z" fill="#4c4944"/><path d="M607.1 491.5V479.5H611.1V491.5" fill="none" stroke="#151413" stroke-width="1.1"/><path d="M608.0 484.6V490.7" stroke="#34322e" stroke-width="1.4"/>
<path d="M637.9 502.2v3.2a31.7 18.1 0 0 0 63.4 0v-3.2z" fill="#45433e" stroke="#131211" stroke-width="1.2"/><ellipse cx="669.6" cy="502.2" rx="31.7" ry="18.1" fill="url(#df)" stroke="#171615" stroke-width="1.2"/><path d="M687.5 506.0 L698.9 509.2 L697.2 511.0 L685.8 507.9z" fill="#3d3b37" stroke="#121110" stroke-width="1.1"/><path d="M651.1 505.1 L638.7 506.3 L638.0 504.3 L650.5 503.0z" fill="#3d3b37" stroke="#121110" stroke-width="1.1"/><path d="M659.0 493.1 L653.1 486.7 L656.3 485.7 L662.3 492.1z" fill="#3d3b37" stroke="#121110" stroke-width="1.1"/><path d="M681.4 493.6 L690.3 488.4 L692.9 489.9 L684.1 495.1z" fill="#3d3b37" stroke="#121110" stroke-width="1.1"/><path d="M663.5 524.1V512.1H667.5V524.1z" fill="#dcdcdc" stroke="none"/><path d="M663.5 517.2V512.1H667.5V517.2z" fill="#4c4944"/><path d="M663.5 524.1V512.1H667.5V524.1" fill="none" stroke="#151413" stroke-width="1.1"/><path d="M664.4 517.2V523.3" stroke="#34322e" stroke-width="1.4"/>
<path d="M694.3 534.8v3.2a31.7 18.1 0 0 0 63.4 0v-3.2z" fill="#45433e" stroke="#131211" stroke-width="1.2"/><ellipse cx="726.0" cy="534.8" rx="31.7" ry="18.1" fill="url(#df)" stroke="#171615" stroke-width="1.2"/><path d="M743.9 538.6 L755.3 541.7 L753.7 543.6 L742.3 540.5z" fill="#3d3b37" stroke="#121110" stroke-width="1.1"/><path d="M707.6 537.7 L695.1 538.9 L694.5 536.9 L706.9 535.6z" fill="#3d3b37" stroke="#121110" stroke-width="1.1"/><path d="M715.4 525.7 L709.5 519.3 L712.7 518.3 L718.7 524.7z" fill="#3d3b37" stroke="#121110" stroke-width="1.1"/><path d="M737.9 526.2 L746.7 521.0 L749.3 522.5 L740.5 527.7z" fill="#3d3b37" stroke="#121110" stroke-width="1.1"/><path d="M720.0 556.7V544.7H724.0V556.7z" fill="#dcdcdc" stroke="none"/><path d="M720.0 549.7V544.7H724.0V549.7z" fill="#4c4944"/><path d="M720.0 556.7V544.7H724.0V556.7" fill="none" stroke="#151413" stroke-width="1.1"/><path d="M720.9 549.7V555.9" stroke="#34322e" stroke-width="1.4"/>
<path d="M750.7 567.3v3.2a31.7 18.1 0 0 0 63.4 0v-3.2z" fill="#45433e" stroke="#131211" stroke-width="1.2"/><ellipse cx="782.4" cy="567.3" rx="31.7" ry="18.1" fill="url(#df)" stroke="#171615" stroke-width="1.2"/><path d="M800.3 571.2 L811.7 574.3 L810.1 576.2 L798.7 573.0z" fill="#3d3b37" stroke="#121110" stroke-width="1.1"/><path d="M764.0 570.3 L751.5 571.5 L750.9 569.4 L763.4 568.2z" fill="#3d3b37" stroke="#121110" stroke-width="1.1"/><path d="M771.9 558.2 L765.9 551.9 L769.2 550.9 L775.1 557.3z" fill="#3d3b37" stroke="#121110" stroke-width="1.1"/><path d="M794.3 558.8 L803.1 553.6 L805.8 555.0 L797.0 560.3z" fill="#3d3b37" stroke="#121110" stroke-width="1.1"/><path d="M776.4 589.3V577.3H780.4V589.3z" fill="#dcdcdc" stroke="none"/><path d="M776.4 582.3V577.3H780.4V582.3z" fill="#4c4944"/><path d="M776.4 589.3V577.3H780.4V589.3" fill="none" stroke="#151413" stroke-width="1.1"/><path d="M777.3 582.3V588.5" stroke="#34322e" stroke-width="1.4"/>
<path d="M807.2 599.9v3.2a31.7 18.1 0 0 0 63.4 0v-3.2z" fill="#45433e" stroke="#131211" stroke-width="1.2"/><ellipse cx="838.9" cy="599.9" rx="31.7" ry="18.1" fill="url(#df)" stroke="#171615" stroke-width="1.2"/><path d="M856.8 603.7 L868.2 606.9 L866.6 608.8 L855.2 605.6z" fill="#3d3b37" stroke="#121110" stroke-width="1.1"/><path d="M820.5 602.8 L808.0 604.1 L807.3 602.0 L819.8 600.8z" fill="#3d3b37" stroke="#121110" stroke-width="1.1"/><path d="M828.3 590.8 L822.4 584.4 L825.6 583.5 L831.6 589.8z" fill="#3d3b37" stroke="#121110" stroke-width="1.1"/><path d="M850.8 591.4 L859.6 586.2 L862.2 587.6 L853.4 592.8z" fill="#3d3b37" stroke="#121110" stroke-width="1.1"/><path d="M832.9 621.9V609.9H836.9V621.9z" fill="#dcdcdc" stroke="none"/><path d="M832.9 614.9V609.9H836.9V614.9z" fill="#4c4944"/><path d="M832.9 621.9V609.9H836.9V621.9" fill="none" stroke="#151413" stroke-width="1.1"/><path d="M833.8 614.9V621.1" stroke="#34322e" stroke-width="1.4"/>
<path d="M863.6 632.5v3.2a31.7 18.1 0 0 0 63.4 0v-3.2z" fill="#45433e" stroke="#131211" stroke-width="1.2"/><ellipse cx="895.3" cy="632.5" rx="31.7" ry="18.1" fill="url(#df)" stroke="#171615" stroke-width="1.2"/><path d="M913.2 636.3 L924.6 639.5 L923.0 641.4 L911.6 638.2z" fill="#3d3b37" stroke="#121110" stroke-width="1.1"/><path d="M876.9 635.4 L864.4 636.7 L863.8 634.6 L876.3 633.4z" fill="#3d3b37" stroke="#121110" stroke-width="1.1"/><path d="M884.8 623.4 L878.8 617.0 L882.1 616.0 L888.0 622.4z" fill="#3d3b37" stroke="#121110" stroke-width="1.1"/><path d="M907.2 624.0 L916.0 618.8 L918.7 620.2 L909.9 625.4z" fill="#3d3b37" stroke="#121110" stroke-width="1.1"/><path d="M889.3 654.5V642.5H893.3V654.5z" fill="#dcdcdc" stroke="none"/><path d="M889.3 647.5V642.5H893.3V647.5z" fill="#4c4944"/><path d="M889.3 654.5V642.5H893.3V654.5" fill="none" stroke="#151413" stroke-width="1.1"/><path d="M890.2 647.5V653.7" stroke="#34322e" stroke-width="1.4"/>
<path d="M920.1 665.1v3.2a31.7 18.1 0 0 0 63.4 0v-3.2z" fill="#45433e" stroke="#131211" stroke-width="1.2"/><ellipse cx="951.8" cy="665.1" rx="31.7" ry="18.1" fill="url(#df)" stroke="#171615" stroke-width="1.2"/><path d="M969.7 668.9 L981.1 672.1 L979.4 674.0 L968.0 670.8z" fill="#3d3b37" stroke="#121110" stroke-width="1.1"/><path d="M933.3 668.0 L920.9 669.3 L920.2 667.2 L932.7 666.0z" fill="#3d3b37" stroke="#121110" stroke-width="1.1"/><path d="M941.2 656.0 L935.3 649.6 L938.5 648.6 L944.5 655.0z" fill="#3d3b37" stroke="#121110" stroke-width="1.1"/><path d="M963.6 656.6 L972.5 651.4 L975.1 652.8 L966.3 658.0z" fill="#3d3b37" stroke="#121110" stroke-width="1.1"/><path d="M945.7 687.1V675.1H949.7V687.1z" fill="#dcdcdc" stroke="none"/><path d="M945.7 680.1V675.1H949.7V680.1z" fill="#4c4944"/><path d="M945.7 687.1V675.1H949.7V687.1" fill="none" stroke="#151413" stroke-width="1.1"/><path d="M946.6 680.1V686.3" stroke="#34322e" stroke-width="1.4"/>
<path d="M976.5 697.7v3.2a31.7 18.1 0 0 0 63.4 0v-3.2z" fill="#45433e" stroke="#131211" stroke-width="1.2"/><ellipse cx="1008.2" cy="697.7" rx="31.7" ry="18.1" fill="url(#df)" stroke="#171615" stroke-width="1.2"/><path d="M1026.1 701.5 L1037.5 704.7 L1035.9 706.6 L1024.5 703.4z" fill="#3d3b37" stroke="#121110" stroke-width="1.1"/><path d="M989.8 700.6 L977.3 701.9 L976.7 699.8 L989.1 698.6z" fill="#3d3b37" stroke="#121110" stroke-width="1.1"/><path d="M997.6 688.6 L991.7 682.2 L994.9 681.2 L1000.9 687.6z" fill="#3d3b37" stroke="#121110" stroke-width="1.1"/><path d="M1020.1 689.2 L1028.9 684.0 L1031.5 685.4 L1022.7 690.6z" fill="#3d3b37" stroke="#121110" stroke-width="1.1"/><path d="M1002.2 719.7V707.7H1006.2V719.7z" fill="#dcdcdc" stroke="none"/><path d="M1002.2 712.7V707.7H1006.2V712.7z" fill="#4c4944"/><path d="M1002.2 719.7V707.7H1006.2V719.7" fill="none" stroke="#151413" stroke-width="1.1"/><path d="M1003.1 712.7V718.9" stroke="#34322e" stroke-width="1.4"/>
<path d="M358.0 402.9v3.2a31.7 18.1 0 0 0 63.4 0v-3.2z" fill="#45433e" stroke="#131211" stroke-width="1.2"/><ellipse cx="389.7" cy="402.9" rx="31.7" ry="18.1" fill="url(#df)" stroke="#171615" stroke-width="1.2"/><path d="M407.6 406.7 L419.0 409.9 L417.4 411.8 L406.0 408.6z" fill="#3d3b37" stroke="#121110" stroke-width="1.1"/><path d="M371.3 405.8 L358.8 407.1 L358.2 405.0 L370.6 403.8z" fill="#3d3b37" stroke="#121110" stroke-width="1.1"/><path d="M379.1 393.8 L373.2 387.4 L376.4 386.4 L382.4 392.8z" fill="#3d3b37" stroke="#121110" stroke-width="1.1"/><path d="M401.6 394.4 L410.4 389.2 L413.0 390.6 L404.2 395.8z" fill="#3d3b37" stroke="#121110" stroke-width="1.1"/><path d="M383.7 424.9V412.9H387.7V424.9z" fill="#dcdcdc" stroke="none"/><path d="M383.7 417.9V412.9H387.7V417.9z" fill="#4c4944"/><path d="M383.7 424.9V412.9H387.7V424.9" fill="none" stroke="#151413" stroke-width="1.1"/><path d="M384.6 417.9V424.1" stroke="#34322e" stroke-width="1.4"/>
<path d="M414.4 435.5v3.2a31.7 18.1 0 0 0 63.4 0v-3.2z" fill="#45433e" stroke="#131211" stroke-width="1.2"/><ellipse cx="446.1" cy="435.5" rx="31.7" ry="18.1" fill="url(#df)" stroke="#171615" stroke-width="1.2"/><path d="M464.0 439.3 L475.4 442.5 L473.8 444.4 L462.4 441.2z" fill="#3d3b37" stroke="#121110" stroke-width="1.1"/><path d="M427.7 438.4 L415.2 439.7 L414.6 437.6 L427.1 436.3z" fill="#3d3b37" stroke="#121110" stroke-width="1.1"/><path d="M435.6 426.4 L429.6 420.0 L432.9 419.0 L438.8 425.4z" fill="#3d3b37" stroke="#121110" stroke-width="1.1"/><path d="M458.0 426.9 L466.8 421.7 L469.5 423.2 L460.7 428.4z" fill="#3d3b37" stroke="#121110" stroke-width="1.1"/><path d="M440.1 457.4V445.4H444.1V457.4z" fill="#dcdcdc" stroke="none"/><path d="M440.1 450.5V445.4H444.1V450.5z" fill="#4c4944"/><path d="M440.1 457.4V445.4H444.1V457.4" fill="none" stroke="#151413" stroke-width="1.1"/><path d="M441.0 450.5V456.6" stroke="#34322e" stroke-width="1.4"/>
<path d="M470.9 468.1v3.2a31.7 18.1 0 0 0 63.4 0v-3.2z" fill="#45433e" stroke="#131211" stroke-width="1.2"/><ellipse cx="502.6" cy="468.1" rx="31.7" ry="18.1" fill="url(#df)" stroke="#171615" stroke-width="1.2"/><path d="M520.5 471.9 L531.9 475.1 L530.3 477.0 L518.9 473.8z" fill="#3d3b37" stroke="#121110" stroke-width="1.1"/><path d="M484.2 471.0 L471.7 472.3 L471.0 470.2 L483.5 468.9z" fill="#3d3b37" stroke="#121110" stroke-width="1.1"/><path d="M492.0 459.0 L486.1 452.6 L489.3 451.6 L495.3 458.0z" fill="#3d3b37" stroke="#121110" stroke-width="1.1"/><path d="M514.5 459.5 L523.3 454.3 L525.9 455.8 L517.1 461.0z" fill="#3d3b37" stroke="#121110" stroke-width="1.1"/><path d="M496.6 490.0V478.0H500.6V490.0z" fill="#dcdcdc" stroke="none"/><path d="M496.6 483.1V478.0H500.6V483.1z" fill="#4c4944"/><path d="M496.6 490.0V478.0H500.6V490.0" fill="none" stroke="#151413" stroke-width="1.1"/><path d="M497.5 483.1V489.2" stroke="#34322e" stroke-width="1.4"/>
<path d="M527.3 500.7v3.2a31.7 18.1 0 0 0 63.4 0v-3.2z" fill="#45433e" stroke="#131211" stroke-width="1.2"/><ellipse cx="559.0" cy="500.7" rx="31.7" ry="18.1" fill="url(#df)" stroke="#171615" stroke-width="1.2"/><path d="M576.9 504.5 L588.3 507.7 L586.7 509.5 L575.3 506.4z" fill="#3d3b37" stroke="#121110" stroke-width="1.1"/><path d="M540.6 503.6 L528.1 504.8 L527.5 502.8 L540.0 501.5z" fill="#3d3b37" stroke="#121110" stroke-width="1.1"/><path d="M548.5 491.6 L542.5 485.2 L545.8 484.2 L551.7 490.6z" fill="#3d3b37" stroke="#121110" stroke-width="1.1"/><path d="M570.9 492.1 L579.7 486.9 L582.4 488.4 L573.6 493.6z" fill="#3d3b37" stroke="#121110" stroke-width="1.1"/><path d="M553.0 522.6V510.6H557.0V522.6z" fill="#dcdcdc" stroke="none"/><path d="M553.0 515.7V510.6H557.0V515.7z" fill="#4c4944"/><path d="M553.0 522.6V510.6H557.0V522.6" fill="none" stroke="#151413" stroke-width="1.1"/><path d="M553.9 515.7V521.8" stroke="#34322e" stroke-width="1.4"/>
<path d="M583.8 533.3v3.2a31.7 18.1 0 0 0 63.4 0v-3.2z" fill="#45433e" stroke="#131211" stroke-width="1.2"/><ellipse cx="615.5" cy="533.3" rx="31.7" ry="18.1" fill="url(#df)" stroke="#171615" stroke-width="1.2"/><path d="M633.4 537.1 L644.8 540.3 L643.1 542.1 L631.7 539.0z" fill="#3d3b37" stroke="#121110" stroke-width="1.1"/><path d="M597.0 536.2 L584.6 537.4 L583.9 535.4 L596.4 534.1z" fill="#3d3b37" stroke="#121110" stroke-width="1.1"/><path d="M604.9 524.2 L599.0 517.8 L602.2 516.8 L608.2 523.2z" fill="#3d3b37" stroke="#121110" stroke-width="1.1"/><path d="M627.3 524.7 L636.2 519.5 L638.8 521.0 L630.0 526.2z" fill="#3d3b37" stroke="#121110" stroke-width="1.1"/><path d="M609.4 555.2V543.2H613.4V555.2z" fill="#dcdcdc" stroke="none"/><path d="M609.4 548.3V543.2H613.4V548.3z" fill="#4c4944"/><path d="M609.4 555.2V543.2H613.4V555.2" fill="none" stroke="#151413" stroke-width="1.1"/><path d="M610.3 548.3V554.4" stroke="#34322e" stroke-width="1.4"/>
<path d="M640.2 565.9v3.2a31.7 18.1 0 0 0 63.4 0v-3.2z" fill="#45433e" stroke="#131211" stroke-width="1.2"/><ellipse cx="671.9" cy="565.9" rx="31.7" ry="18.1" fill="url(#df)" stroke="#171615" stroke-width="1.2"/><path d="M689.8 569.7 L701.2 572.8 L699.6 574.7 L688.2 571.6z" fill="#3d3b37" stroke="#121110" stroke-width="1.1"/><path d="M653.5 568.8 L641.0 570.0 L640.4 568.0 L652.8 566.7z" fill="#3d3b37" stroke="#121110" stroke-width="1.1"/><path d="M661.3 556.8 L655.4 550.4 L658.6 549.4 L664.6 555.8z" fill="#3d3b37" stroke="#121110" stroke-width="1.1"/><path d="M683.8 557.3 L692.6 552.1 L695.2 553.6 L686.4 558.8z" fill="#3d3b37" stroke="#121110" stroke-width="1.1"/><path d="M665.9 587.8V575.8H669.9V587.8z" fill="#dcdcdc" stroke="none"/><path d="M665.9 580.8V575.8H669.9V580.8z" fill="#4c4944"/><path d="M665.9 587.8V575.8H669.9V587.8" fill="none" stroke="#151413" stroke-width="1.1"/><path d="M666.8 580.8V587.0" stroke="#34322e" stroke-width="1.4"/>
<path d="M696.6 598.4v3.2a31.7 18.1 0 0 0 63.4 0v-3.2z" fill="#45433e" stroke="#131211" stroke-width="1.2"/><ellipse cx="728.3" cy="598.4" rx="31.7" ry="18.1" fill="url(#df)" stroke="#171615" stroke-width="1.2"/><path d="M746.2 602.3 L757.6 605.4 L756.0 607.3 L744.6 604.1z" fill="#3d3b37" stroke="#121110" stroke-width="1.1"/><path d="M709.9 601.4 L697.4 602.6 L696.8 600.5 L709.3 599.3z" fill="#3d3b37" stroke="#121110" stroke-width="1.1"/><path d="M717.8 589.3 L711.8 583.0 L715.1 582.0 L721.0 588.4z" fill="#3d3b37" stroke="#121110" stroke-width="1.1"/><path d="M740.2 589.9 L749.0 584.7 L751.7 586.1 L742.9 591.4z" fill="#3d3b37" stroke="#121110" stroke-width="1.1"/><path d="M722.3 620.4V608.4H726.3V620.4z" fill="#dcdcdc" stroke="none"/><path d="M722.3 613.4V608.4H726.3V613.4z" fill="#4c4944"/><path d="M722.3 620.4V608.4H726.3V620.4" fill="none" stroke="#151413" stroke-width="1.1"/><path d="M723.2 613.4V619.6" stroke="#34322e" stroke-width="1.4"/>
<path d="M753.1 631.0v3.2a31.7 18.1 0 0 0 63.4 0v-3.2z" fill="#45433e" stroke="#131211" stroke-width="1.2"/><ellipse cx="784.8" cy="631.0" rx="31.7" ry="18.1" fill="url(#df)" stroke="#171615" stroke-width="1.2"/><path d="M802.7 634.8 L814.1 638.0 L812.5 639.9 L801.1 636.7z" fill="#3d3b37" stroke="#121110" stroke-width="1.1"/><path d="M766.4 633.9 L753.9 635.2 L753.2 633.1 L765.7 631.9z" fill="#3d3b37" stroke="#121110" stroke-width="1.1"/><path d="M774.2 621.9 L768.3 615.5 L771.5 614.6 L777.5 620.9z" fill="#3d3b37" stroke="#121110" stroke-width="1.1"/><path d="M796.7 622.5 L805.5 617.3 L808.1 618.7 L799.3 623.9z" fill="#3d3b37" stroke="#121110" stroke-width="1.1"/><path d="M778.8 653.0V641.0H782.8V653.0z" fill="#dcdcdc" stroke="none"/><path d="M778.8 646.0V641.0H782.8V646.0z" fill="#4c4944"/><path d="M778.8 653.0V641.0H782.8V653.0" fill="none" stroke="#151413" stroke-width="1.1"/><path d="M779.7 646.0V652.2" stroke="#34322e" stroke-width="1.4"/>
<path d="M809.5 663.6v3.2a31.7 18.1 0 0 0 63.4 0v-3.2z" fill="#45433e" stroke="#131211" stroke-width="1.2"/><ellipse cx="841.2" cy="663.6" rx="31.7" ry="18.1" fill="url(#df)" stroke="#171615" stroke-width="1.2"/><path d="M859.1 667.4 L870.5 670.6 L868.9 672.5 L857.5 669.3z" fill="#3d3b37" stroke="#121110" stroke-width="1.1"/><path d="M822.8 666.5 L810.3 667.8 L809.7 665.7 L822.2 664.5z" fill="#3d3b37" stroke="#121110" stroke-width="1.1"/><path d="M830.7 654.5 L824.7 648.1 L828.0 647.1 L833.9 653.5z" fill="#3d3b37" stroke="#121110" stroke-width="1.1"/><path d="M853.1 655.1 L861.9 649.9 L864.6 651.3 L855.8 656.5z" fill="#3d3b37" stroke="#121110" stroke-width="1.1"/><path d="M835.2 685.6V673.6H839.2V685.6z" fill="#dcdcdc" stroke="none"/><path d="M835.2 678.6V673.6H839.2V678.6z" fill="#4c4944"/><path d="M835.2 685.6V673.6H839.2V685.6" fill="none" stroke="#151413" stroke-width="1.1"/><path d="M836.1 678.6V684.8" stroke="#34322e" stroke-width="1.4"/>
<path d="M866.0 696.2v3.2a31.7 18.1 0 0 0 63.4 0v-3.2z" fill="#45433e" stroke="#131211" stroke-width="1.2"/><ellipse cx="897.7" cy="696.2" rx="31.7" ry="18.1" fill="url(#df)" stroke="#171615" stroke-width="1.2"/><path d="M915.6 700.0 L927.0 703.2 L925.3 705.1 L913.9 701.9z" fill="#3d3b37" stroke="#121110" stroke-width="1.1"/><path d="M879.2 699.1 L866.8 700.4 L866.1 698.3 L878.6 697.1z" fill="#3d3b37" stroke="#121110" stroke-width="1.1"/><path d="M887.1 687.1 L881.2 680.7 L884.4 679.7 L890.4 686.1z" fill="#3d3b37" stroke="#121110" stroke-width="1.1"/><path d="M909.5 687.7 L918.4 682.5 L921.0 683.9 L912.2 689.1z" fill="#3d3b37" stroke="#121110" stroke-width="1.1"/><path d="M891.6 718.2V706.2H895.6V718.2z" fill="#dcdcdc" stroke="none"/><path d="M891.6 711.2V706.2H895.6V711.2z" fill="#4c4944"/><path d="M891.6 718.2V706.2H895.6V718.2" fill="none" stroke="#151413" stroke-width="1.1"/><path d="M892.5 711.2V717.4" stroke="#34322e" stroke-width="1.4"/>
<path d="M922.4 728.8v3.2a31.7 18.1 0 0 0 63.4 0v-3.2z" fill="#45433e" stroke="#131211" stroke-width="1.2"/><ellipse cx="954.1" cy="728.8" rx="31.7" ry="18.1" fill="url(#df)" stroke="#171615" stroke-width="1.2"/><path d="M972.0 732.6 L983.4 735.8 L981.8 737.7 L970.4 734.5z" fill="#3d3b37" stroke="#121110" stroke-width="1.1"/><path d="M935.7 731.7 L923.2 733.0 L922.6 730.9 L935.0 729.7z" fill="#3d3b37" stroke="#121110" stroke-width="1.1"/><path d="M943.5 719.7 L937.6 713.3 L940.8 712.3 L946.8 718.7z" fill="#3d3b37" stroke="#121110" stroke-width="1.1"/><path d="M966.0 720.3 L974.8 715.1 L977.4 716.5 L968.6 721.7z" fill="#3d3b37" stroke="#121110" stroke-width="1.1"/><path d="M948.1 750.8V738.8H952.1V750.8z" fill="#dcdcdc" stroke="none"/><path d="M948.1 743.8V738.8H952.1V743.8z" fill="#4c4944"/><path d="M948.1 750.8V738.8H952.1V750.8" fill="none" stroke="#151413" stroke-width="1.1"/><path d="M949.0 743.8V750.0" stroke="#34322e" stroke-width="1.4"/>
<path d="M527 439c2 8 10 13 20 15" fill="none" stroke="#e8e8e8" stroke-width="2.200" stroke-linecap="round"/>
<path d="M436.200 305.100L498.900 269.500V341.600L436.200 377.800z" fill="rgba(249,180,45,0.31)"/>
<path d="M516.100 269.500L578.800 305.100V377.800L516.100 341.600z" fill="rgba(249,180,45,0.31)"/>
<path d="M507.500 356.400L570.200 392.700L507.500 428.800L444.800 392.700z" fill="rgba(249,180,45,0.31)"/>
<path d="M507.500 257v29M507.500 290v11M507.500 306v35" stroke="#19e019" stroke-width="1.900" fill="none"/>
<path d="M513 349.500L531 360" stroke="#e81c1c" stroke-width="1.800"/><path d="M531 360L574 385" stroke="#c8403a" stroke-width="1.200" stroke-dasharray="9 3" opacity="0.75"/><path d="M574 385L584.500 391" stroke="#e81c1c" stroke-width="1.800"/>
<path d="M501 350L474.500 365.500" stroke="#1c2ce0" stroke-width="1.800"/><path d="M474.500 365.500L439 386" stroke="#3a44b8" stroke-width="1.200" opacity="0.7"/>
<circle cx="507.200" cy="346.200" r="4.600" fill="#f4f4f4" stroke="#8a8a8a" stroke-width="0.900"/><path d="M503 347.500a4.300 4.300 0 0 0 8.400 0z" fill="#b9b9b9"/>
</svg>
<svg style="left:0;top:0" width="1596" height="220" viewBox="0 0 1596 220"><defs><radialGradient id="cs" cx="0.5" cy="0.5" r="0.5"><stop offset="0" stop-color="#000" stop-opacity="0.22"/><stop offset="1" stop-color="#000" stop-opacity="0"/></radialGradient><linearGradient id="cf" x1="0" y1="0" x2="0" y2="1"><stop offset="0" stop-color="#d9d9d9"/><stop offset="1" stop-color="#e6e6e6"/></linearGradient><linearGradient id="cr" x1="0" y1="0" x2="0" y2="1"><stop offset="0" stop-color="#e3e3e3"/><stop offset="1" stop-color="#d6d6d6"/></linearGradient></defs><ellipse cx="1532" cy="186" rx="34" ry="13" fill="url(#cs)"/><path d="M1524.600 111.200L1559.500 126.300L1524.300 145.700L1489.700 126.500z" fill="#e8e8e8" stroke="#8e8e8e" stroke-width="0.800"/><path d="M1489.700 126.500L1524.300 145.700L1524.600 186.600L1493 161.700z" fill="url(#cf)" stroke="#8e8e8e" stroke-width="0.800"/><path d="M1559.500 126.300L1524.300 145.700L1524.600 186.600L1555.900 163z" fill="url(#cr)" stroke="#8e8e8e" stroke-width="0.800"/><text font-family="Liberation Sans, sans-serif" font-size="9" font-weight="bold" fill="#858585" text-anchor="middle" transform="matrix(0.82 0.42 -0.82 0.42 1524.500 128.300)" x="0" y="3.200">TOP</text><text font-family="Liberation Sans, sans-serif" font-size="9" font-weight="bold" fill="#858585" text-anchor="middle" transform="matrix(0.80 0.50 0 0.95 1507.800 155)" x="0" y="3.200">FRONT</text><text font-family="Liberation Sans, sans-serif" font-size="9" font-weight="bold" fill="#858585" text-anchor="middle" transform="matrix(0.80 -0.50 0 0.95 1541 154.500)" x="0" y="3.200">RIGHT</text><path d="M1525.200 99v12" stroke="#4fd85a" stroke-width="2"/><path d="M1487.500 168.700l6.500-3.700" stroke="#2a2ad8" stroke-width="2"/><path d="M1556 164.300l6.300 4.400" stroke="#e84a5a" stroke-width="2"/><text font-family="Liberation Sans, sans-serif" font-size="11" text-anchor="middle" x="1524.500" y="99" fill="#8fe69a">Y</text><text font-family="Liberation Sans, sans-serif" font-size="11" text-anchor="middle" x="1481.500" y="176" fill="#8c8cea" font-style="italic">Z</text><text font-family="Liberation Sans, sans-serif" font-size="11" text-anchor="middle" x="1567.500" y="176" fill="#ec8a8a">X</text></svg>
<div class="a" style="left:10px;top:87px;width:1362px;height:59.500px;background:#dedede"></div>
<div class="a" style="left:10px;top:87px;width:103px;height:59.500px;background:#acacac"></div>
<div class="a" style="left:16px;top:105px;width:1px;height:23px;background:#8f8f8f"></div>
<div class="a" style="left:19px;top:105px;width:1px;height:23px;background:#8f8f8f"></div>
<div class="t" style="left:42px;top:113px;font-size:11px;color:#fff;font-weight:bold;letter-spacing:-0.55px;">MODEL</div>
<svg style="left:85px;top:116px" width="8" height="6"><path d="M0 0h5.400l-2.700 3.800z" fill="#fff"/></svg>
<div class="t" style="left:304.5px;top:133px;font-size:10.5px;color:#4a4a4a;letter-spacing:-0.65px;">SKETCH</div>
<svg style="left:347.5px;top:136px" width="8" height="6"><path d="M0 0h5.400l-2.700 3.800z" fill="#3c3c3c"/></svg>
<div class="t" style="left:590.5px;top:133px;font-size:10.5px;color:#4a4a4a;letter-spacing:-0.52px;">CREATE</div>
<svg style="left:633.6px;top:136px" width="8" height="6"><path d="M0 0h5.400l-2.700 3.800z" fill="#3c3c3c"/></svg>
<div class="t" style="left:703.6px;top:133px;font-size:10.5px;color:#4a4a4a;letter-spacing:-0.66px;">MODIFY</div>
<svg style="left:745px;top:136px" width="8" height="6"><path d="M0 0h5.400l-2.700 3.800z" fill="#3c3c3c"/></svg>
<div class="t" style="left:788.6px;top:133px;font-size:10.5px;color:#4a4a4a;letter-spacing:-0.35px;">ASSEMBLE</div>
<svg style="left:846.4px;top:136px" width="8" height="6"><path d="M0 0h5.400l-2.700 3.800z" fill="#3c3c3c"/></svg>
<div class="t" style="left:878.5px;top:133px;font-size:10.5px;color:#4a4a4a;letter-spacing:-0.54px;">CONSTRUCT</div>
<svg style="left:943.6px;top:136px" width="8" height="6"><path d="M0 0h5.400l-2.700 3.800z" fill="#3c3c3c"/></svg>
<div class="t" style="left:976.4px;top:133px;font-size:10.5px;color:#4a4a4a;letter-spacing:-0.46px;">INSPECT</div>
<svg style="left:1020.5px;top:136px" width="8" height="6"><path d="M0 0h5.400l-2.700 3.800z" fill="#3c3c3c"/></svg>
<div class="t" style="left:1050.6px;top:133px;font-size:10.5px;color:#4a4a4a;letter-spacing:-0.67px;">INSERT</div>
<svg style="left:1088.3px;top:136px" width="8" height="6"><path d="M0 0h5.400l-2.700 3.800z" fill="#3c3c3c"/></svg>
<div class="t" style="left:1114.4px;top:133px;font-size:10.5px;color:#4a4a4a;letter-spacing:-0.42px;">MAKE</div>
<svg style="left:1146.5px;top:136px" width="8" height="6"><path d="M0 0h5.400l-2.700 3.800z" fill="#3c3c3c"/></svg>
<div class="t" style="left:1173.5px;top:133px;font-size:10.5px;color:#4a4a4a;letter-spacing:-0.30px;">ADD-INS</div>
<div class="t" style="left:1278.4px;top:133px;font-size:10.5px;color:#4a4a4a;letter-spacing:-0.64px;">SELECT</div>
<svg style="left:1319px;top:136px" width="8" height="6"><path d="M0 0h5.400l-2.700 3.800z" fill="#3c3c3c"/></svg>
<div class="a" style="left:547px;top:92px;width:1px;height:50px;background:#c6c6c6"></div>
<div class="a" style="left:682px;top:92px;width:1px;height:50px;background:#c6c6c6"></div>
<div class="a" style="left:774px;top:92px;width:1px;height:50px;background:#c6c6c6"></div>
<div class="a" style="left:866px;top:92px;width:1px;height:50px;background:#c6c6c6"></div>
<div class="a" style="left:965px;top:92px;width:1px;height:50px;background:#c6c6c6"></div>
<div class="a" style="left:1039px;top:92px;width:1px;height:50px;background:#c6c6c6"></div>
<div class="a" style="left:1103px;top:92px;width:1px;height:50px;background:#c6c6c6"></div>
<div class="a" style="left:1162px;top:92px;width:1px;height:50px;background:#c6c6c6"></div>
<div class="a" style="left:1235px;top:92px;width:1px;height:50px;background:#c6c6c6"></div>
<svg style="left:0;top:0" width="1596" height="160" viewBox="0 0 1596 160">
<defs>
<linearGradient id="gw" x1="0" y1="0" x2="0" y2="1"><stop offset="0" stop-color="#fdfdfe"/><stop offset="1" stop-color="#a9b4c8"/></linearGradient>
<linearGradient id="gb" x1="0" y1="0" x2="1" y2="1"><stop offset="0" stop-color="#c4daf2"/><stop offset="1" stop-color="#7fa6d4"/></linearGradient>
<linearGradient id="gs" x1="0" y1="0" x2="0" y2="1"><stop offset="0" stop-color="#f6f7f9"/><stop offset="1" stop-color="#b4bac4"/></linearGradient>
<linearGradient id="gp" x1="0" y1="0" x2="0" y2="1"><stop offset="0" stop-color="#e9c4f6"/><stop offset="1" stop-color="#b77fd9"/></linearGradient>
<linearGradient id="gg" x1="0" y1="0" x2="0" y2="1"><stop offset="0" stop-color="#b5dc95"/><stop offset="1" stop-color="#6aa84a"/></linearGradient>
</defs>
<!-- 1 new sketch -->
<g>
<rect x="123.500" y="98.500" width="25" height="25" fill="url(#gw)" stroke="#2f3440" stroke-width="1.400"/>
<path d="M127 102v18h18" fill="none" stroke="#6b7894" stroke-width="1"/>
<path d="M135 110l10-11 4 3.500-10 11-5 1.500z" fill="#f3cf4a" stroke="#4a4020" stroke-width="0.900"/>
<path d="M141.500 115.500h3.500v-3.500h3v3.500h3.500v3h-3.500v3.500h-3v-3.500h-3.500z" fill="#fff" stroke="#222" stroke-width="1"/>
</g>
<!-- 2 line arc -->
<g fill="none" stroke="#3a3f4a" stroke-width="1.300">
<path d="M167 119.500h16"/><path d="M183 119.500c14 0 14-17.500 1-17.500"/>
<g fill="#3d63b8" stroke="none"><rect x="164.500" y="117.300" width="4.600" height="4.600"/><rect x="180.700" y="117.300" width="4.600" height="4.600"/><rect x="181.700" y="99.700" width="4.600" height="4.600"/></g>
</g>
<!-- 3 rectangle -->
<g><rect x="210" y="103.500" width="26" height="16" fill="url(#gw)" stroke="#2f3440" stroke-width="1.300"/>
<rect x="207.700" y="116.800" width="4.600" height="4.600" fill="#3d63b8"/><rect x="233.700" y="101.200" width="4.600" height="4.600" fill="#3d63b8"/></g>
<!-- 4 offset shape -->
<g fill="none">
<path d="M281 121.500h-26.500c-3.500 0-3.500-6.500 0-6.500h4.500v-10.500c0-5 9-5 9 0v8h13" stroke="#8fb0de" stroke-width="3.600"/>
<path d="M281 119.500h-25.500c-1.800 0-1.800-2.500 0-2.500h6v-12c0-3 5.500-3 5.500 0v10h14" stroke="#3c5f9f" stroke-width="0.900"/>
<path d="M281 121.500h-26.500c-3.500 0-3.500-6.500 0-6.500h4.500v-10.500c0-5 9-5 9 0v8h13" stroke="#e9eff8" stroke-width="1.600"/>
</g>
<!-- 5 mirror -->
<g stroke="#6c7480" stroke-width="1">
<path d="M295.500 99h4l4 3v11h-2.500v7l-5.500 2z" fill="url(#gs)"/>
<path d="M321.500 99h-4l-4 3v11h2.500v7l5.500 2z" fill="#b5cdea"/>
<path d="M308.500 95v28" stroke="#555"/>
</g>
<!-- 6 pattern -->
<g stroke="#7a8390" stroke-width="1">
<path d="M341 99h21M341 121h21M341 99v22" fill="none"/>
<rect x="337.500" y="95.500" width="7.500" height="7.500" fill="#eceef2"/><rect x="358.500" y="95.500" width="7.500" height="7.500" fill="#b5cdea"/>
<rect x="337.500" y="117.500" width="7.500" height="7.500" fill="#b5cdea"/><rect x="358.500" y="117.500" width="7.500" height="7.500" fill="#b5cdea"/>
</g>
<!-- 7 fillet -->
<g fill="none"><path d="M381.500 112c0-9 4-14.500 13.500-14.500" stroke="#9db6dc" stroke-width="2"/><path d="M381.500 112v13M395 97.500h13.500" stroke="#333" stroke-width="1.200"/><path d="M392 110.500h5M394.500 108v5" stroke="#333" stroke-width="1"/></g>
<!-- 8 rect plus -->
<g><rect x="424.500" y="103" width="26" height="16.500" rx="1.500" fill="url(#gw)" stroke="#2f3440" stroke-width="1.200"/><rect x="448" y="101" width="4.400" height="4.400" fill="#3d63b8"/><path d="M434.500 110.500h5M437 108v5" stroke="#333" stroke-width="1"/></g>
<!-- 9 dimension -->
<g fill="none" stroke="#707070" stroke-width="1"><path d="M466.500 97v28M495.500 97v28M467 106.500h28"/><path d="M470 104l-3 2.500 3 2.500M492 104l3 2.500-3 2.500"/></g>
<!-- 10 A -->
<text x="509.500" y="124" font-family="Liberation Sans, sans-serif" font-weight="bold" font-size="38" fill="#3a3a3a">A</text>
<!-- 11 extrude -->
<g stroke="#4a5568" stroke-width="1">
<path d="M558.500 101l5-5.500h17l-5 5.500z" fill="#dfeaf8"/><path d="M575.500 101l5-5.500v24l-5 5z" fill="#7f9fc8"/><rect x="558.500" y="101" width="17" height="23.500" fill="url(#gb)"/>
<path d="M559 121h16l5-4" fill="none" stroke="#dfe9f6" stroke-width="1"/>
<path d="M586 122v-22M583.500 103l2.500-4 2.500 4" fill="none" stroke="#222" stroke-width="1.200"/>
</g>
<!-- 12 purple form -->
<g>
<rect x="601" y="96" width="26" height="26" rx="7" fill="url(#gp)" stroke="#8a4fb8" stroke-width="1"/>
<path d="M608 96.500v25M615 96.500v25M621.500 97v24M601.500 104h25M601.500 110.500h25M601.500 116.500h25" stroke="#8a4fb8" stroke-width="0.900" fill="none"/>
<rect x="622.500" y="114.500" width="9" height="9" fill="#e8e8e8" stroke="#222" stroke-width="1.100"/><path d="M624 119h4.500M626.500 116.500l2.500 2.500-2.500 2.500" stroke="#222" stroke-width="1.200" fill="none"/>
</g>
<!-- 13 mirror 3d -->
<g stroke="#3f4756" stroke-width="1">
<path d="M645.500 100l4-3.500 4.500 3v10h-2.500v9.500l-6 4z" fill="url(#gs)"/><path d="M649.500 96.500l2 0 4.500 3v10h-2" fill="#fff"/>
<path d="M672.500 100l-4-3.500-4.500 3v10h2.500v9.500l6 4z" fill="#a9c6ea"/>
<path d="M658.500 95v29" stroke="#333"/>
</g>
<!-- 14 press pull -->
<g stroke="#4a5568" stroke-width="1">
<path d="M694 102l6-6.500h7l-6 6.500z" fill="#fff"/><rect x="694" y="102" width="7" height="22" fill="url(#gs)"/>
<path d="M701 102l6-6.500h13l-6 6.500z" fill="#dfeaf8"/><rect x="701" y="102" width="13" height="22" fill="url(#gb)"/><path d="M714 102l6-6.500v22l-6 6.500z" fill="#7f9fc8"/>
<path d="M715 106.500h4v-3l4.500 5-4.500 5v-3h-4z" fill="#222" stroke="none"/>
</g>
<!-- 15 sigma -->
<text x="738.800" y="126" font-family="Liberation Serif, serif" font-size="47" fill="#000" stroke="#000" stroke-width="0.500" textLength="24" lengthAdjust="spacingAndGlyphs">Σ</text>
<!-- 16 assemble -->
<g stroke="#6c7890" stroke-width="1">
<path d="M784.500 112h12v12h-12z" fill="#e4e7ee"/><path d="M796.500 112h12v12h-12z" fill="#d8dce6"/><path d="M796.500 112l5-5h12l-5 5z" fill="#eef0f5"/><path d="M808.500 112l5-5v12l-5 5z" fill="#c2c8d4"/>
<path d="M784.500 100h12v12h-12z" fill="#9fc0e8"/><path d="M784.500 100l5-4.500h12l-5 4.500z" fill="#c9dcf3"/><path d="M796.500 100l5-4.500v11.500l-5 5z" fill="#7d9fd0"/>
<path d="M788 98.500h-3.500v-3h3.500v-3.500h3v3.500h3.500v3h-3.500v3.500h-3z" fill="#fff" stroke="#222" stroke-width="0.900"/>
</g>
<!-- 17 joint -->
<g stroke="#5a6270" stroke-width="1">
<path d="M829 103l6-6.500 4 2v20l-6 4-4-2z" fill="url(#gs)"/><path d="M835 96.500c2.500-1.500 5 0 4.500 2.500" fill="#eee"/>
<path d="M856.500 104l-5-4.500-9 7v11l9 6 5-4z" fill="url(#gs)"/><path d="M842.500 106.500c-0.500-3 4-5 5.500-2v14l-5.500-1.500z" fill="#f4f5f7"/>
<path d="M840.500 99v22" stroke="#e8862a" stroke-width="1"/>
</g>
<!-- 18 construct -->
<g stroke="#5a6270" stroke-width="1">
<path d="M880 101l5-5h11l-5 5z" fill="#f2f3f5"/><rect x="880" y="101" width="11" height="23" fill="url(#gs)"/><path d="M891 101l5-5v23l-5 5z" fill="#4f9a48" stroke="#3a7a35"/>
<path d="M901 102l9-6v22l-9 6z" fill="#ee9055" stroke="#b8622c"/>
</g>
<!-- 19 construct 2 -->
<g stroke="#5a6270" stroke-width="1">
<path d="M923 101l5-5h11l-5 5z" fill="#f2f3f5"/><rect x="923" y="101" width="11" height="23" fill="url(#gs)"/><path d="M934 101l5-5v23l-5 5z" fill="#c9ccd2"/>
<path d="M923.500 102.500h10.500" stroke="#5aa64e" stroke-width="1.600"/>
<path d="M945 102l8-6v22l-8 6z" fill="#4f9a48" stroke="#3a7a35"/>
<path d="M945 100.500l2.800 2.800-2.800 2.800-2.800-2.800z" fill="#f8c89a" stroke="#d67a30" stroke-width="0.900"/>
</g>
<!-- 20 inspect -->
<g><path d="M987.500 104.500h28M987.500 102.500v4M1015.500 102.500v4" stroke="#333" stroke-width="1.100" fill="none"/>
<rect x="986.500" y="113.500" width="29.500" height="6" rx="1" fill="#f6c436" stroke="#c8901a" stroke-width="1"/>
<path d="M990 114v2.500M993 114v2.500M996 114v2.500M999 114v2.500M1002 114v2.500M1005 114v2.500M1008 114v2.500M1011 114v2.500" stroke="#9a6c10" stroke-width="0.800"/></g>
<!-- 21 insert image -->
<g><rect x="1056" y="95.500" width="30" height="29" rx="1.500" fill="#a9c4e6" stroke="#4a4f58" stroke-width="1.200"/>
<rect x="1057" y="96.500" width="28" height="12" fill="#bcd3ee" stroke="none"/>
<rect x="1074.500" y="100" width="6" height="6" fill="#f7f1b8"/>
<path d="M1057 118l11-11 11 10 6-5v12h-28z" fill="#8b8f96"/><path d="M1057 120l11-13 9 17h-20z" fill="#6e7279"/><path d="M1068 107l8 8 9 9h-8z" fill="#a4a8ae"/></g>
<!-- 22 make -->
<g><rect x="1118.500" y="97" width="29.500" height="27.500" rx="4" fill="#f1f1f1" stroke="#4a4a4a" stroke-width="1.300"/>
<rect x="1122.500" y="107" width="21.500" height="14" fill="#5c6068" stroke="#3a3a3a" stroke-width="1"/>
<circle cx="1143" cy="104" r="1" fill="#444"/>
<path d="M1131.500 107h3.500v5h2.500l-4.200 4-4.200-4h2.400z" fill="#4c88cc"/><path d="M1125 120l4-5h9l4 5z" fill="#dfe3ea"/></g>
<!-- 23 add-ins -->
<g><rect x="1184.500" y="97.500" width="23" height="20" rx="1" fill="url(#gs)" stroke="#5a5f68" stroke-width="1"/><rect x="1184.500" y="97.500" width="23" height="4" fill="#70757e"/>
<path d="M1187.500 105l3 2.500-3 2.500M1192 107.500h4" stroke="#4a4f58" stroke-width="1" fill="none"/>
<path d="M1211.67 115.84L1213.64 116.04L1213.64 117.96L1211.67 118.16L1210.97 119.84L1212.22 121.37L1210.87 122.72L1209.34 121.47L1207.66 122.17L1207.46 124.14L1205.54 124.14L1205.34 122.17L1203.66 121.47L1202.13 122.72L1200.78 121.37L1202.03 119.84L1201.33 118.16L1199.36 117.96L1199.36 116.04L1201.33 115.84L1202.03 114.16L1200.78 112.63L1202.13 111.28L1203.66 112.53L1205.34 111.83L1205.54 109.86L1207.46 109.86L1207.66 111.83L1209.34 112.53L1210.87 111.28L1212.22 112.63L1210.97 114.16z" fill="#eef3fb" stroke="#3d63b8" stroke-width="1"/><circle cx="1206.500" cy="117" r="2.400" fill="#dedede" stroke="#3d63b8" stroke-width="1"/></g>
<!-- 24 select -->
<g><rect x="1241" y="91.500" width="39.500" height="38.500" fill="#4d7fb2"/>
<rect x="1246.500" y="96" width="20.500" height="13.500" fill="none" stroke="#4f8f3f" stroke-width="1.400"/>
<path d="M1267 109.500v13l3-2.800 2.200 5 2.200-1-2.200-4.800h4.200z" fill="#fff" stroke="#222" stroke-width="0.900"/></g>
<!-- 25 green cubes -->
<g stroke="#2f5a22" stroke-width="0.900" stroke-linejoin="round">
<path d="M1290 103h12v21h-12z" fill="url(#gg)"/><path d="M1302 113.500h11v10.500h-11z" fill="url(#gg)"/>
<path d="M1290 103l7-7h12l-7 7z" fill="#b4dc94"/><path d="M1302 103l7-7v10.500l-7 7z" fill="#4f8f3f"/>
<path d="M1302 113.500l7-7h11l-7 7z" fill="#a5d283"/><path d="M1313 113.500l7-7v10.500l-7 7z" fill="#4a8a3a"/>
<path d="M1290 113.500h12M1296 103v21M1307.500 113.500v10.500" fill="none" stroke-width="0.800"/>
<path d="M1305 99v12.500l2.800-2.600 2.100 4.700 2.100-1-2.100-4.500h4z" fill="#fff" stroke="#222" stroke-width="0.900"/></g>
<!-- 26 select window -->
<g><rect x="1332.500" y="95.500" width="20.500" height="14" fill="none" stroke="#7cb342" stroke-width="1.300"/>
<path d="M1352.500 110v13l3-2.800 2.200 5 2.200-1-2.200-4.800h4.200z" fill="#fff" stroke="#222" stroke-width="0.900"/></g>
</svg>

<div class="a" style="left:10px;top:151px;width:300px;height:25px;background:#d5d5d5;border:1px solid #b8b8b8"></div>
<svg style="left:15px;top:159px" width="12" height="9"><path d="M5 0v8l-5-4zM10.500 0v8l-5-4z" fill="#3a3a3a"/></svg>
<div class="t" style="left:37px;top:158px;font-size:11px;color:#585858;letter-spacing:-0.69px;">BROWSER</div>
<svg style="left:288px;top:158px" width="10" height="10"><circle cx="5" cy="5" r="4.600" fill="#222"/><path d="M2.500 5h5" stroke="#ddd" stroke-width="1.300"/></svg>
<div class="a" style="left:304px;top:156px;width:1px;height:14px;background:#8a8a8a"></div><div class="a" style="left:306px;top:158px;width:1px;height:9px;background:#9a9a9a"></div>
<svg style="left:27px;top:185px" width="13" height="12"><path d="M0.800 11.200h10.400v-10.400z" fill="#8c8c8c" stroke="#2e2e2e" stroke-width="1"/></svg>
<div class="a" style="left:46px;top:181px;width:200px;height:20px;background:#c9c9c9"></div>
<div class="a" style="left:46px;top:181px;width:175px;height:20px;background:#828282"></div>
<svg style="left:50px;top:182px" width="12" height="18"><path d="M6 2.300a4.900 4.900 0 0 1 2.500 9.100v1.800h-5v-1.800a4.900 4.900 0 0 1 2.500-9.100z" fill="#f7e862" stroke="#9c8a2a" stroke-width="0.900"/><circle cx="4.900" cy="6" r="1.800" fill="#fffcd8"/><path d="M3.800 14.300h4.400M4.300 15.900h3.400" stroke="#6a6a7a" stroke-width="1.100"/></svg>
<svg style="left:74px;top:182px" width="18" height="18"><path d="M1 5l4-3.500h11.500v10.500l-4 4.500h-11.500z" fill="#f2f2f2" stroke="#9a9a9a" stroke-width="0.800"/><path d="M1 5h11.500v11.500M12.500 5l4-3.500" fill="none" stroke="#b0b0b0" stroke-width="0.800"/></svg>
<div class="t" style="left:104px;top:185.5px;font-size:11px;color:#fff;font-weight:bold;letter-spacing:0.31px;">press fit kit rond v0</div>
<svg style="left:224px;top:184px" width="14" height="14"><circle cx="7" cy="7" r="5.800" fill="#fff" stroke="#222" stroke-width="1.200"/><circle cx="7" cy="7" r="2.300" fill="#222"/></svg>
<svg style="left:44px;top:209px" width="13" height="12"><path d="M0.800 11.200h10.400v-10.400z" fill="#8c8c8c" stroke="#2e2e2e" stroke-width="1"/></svg>
<div class="a" style="left:64px;top:205px;width:110px;height:20px;background:#cbcbcb"></div>
<svg style="left:67px;top:208px" width="17" height="14"><path d="M0.500 13.500v-12h5.500l1.500 2h8v10z" fill="#eaeaea" stroke="#555" stroke-width="1"/><path d="M0.500 4h15" stroke="#555" stroke-width="0.800" opacity="0.6"/></svg>
<div class="t" style="left:97px;top:209.5px;font-size:11px;color:#4a4a4a;letter-spacing:-0.15px;">Named Views</div>
<div class="a" style="left:66px;top:220px;width:104px;height:3px;background:repeating-linear-gradient(120deg,#7186b2 0,#7186b2 1.300px,transparent 1.300px,transparent 3.600px)"></div>
<div class="a" style="left:82px;top:229px;width:62px;height:20px;background:#cbcbcb"></div>
<svg style="left:85px;top:231px" width="17" height="17"><rect x="0.600" y="0.600" width="15" height="15" fill="#c9dcf4" stroke="#1f3c70" stroke-width="1.200"/><rect x="2.300" y="2.300" width="11.600" height="11.600" fill="none" stroke="#eef4fc" stroke-width="0.900"/><path d="M5.500 4.500v7h7M5.500 11.500l4.500-4.500" stroke="#1f3c70" stroke-width="1.200" fill="none"/><path d="M5.500 3.500l-1.800 2.500h3.600zM13.300 11.500l-2.500-1.800v3.600z" fill="#1f3c70"/></svg>
<div class="t" style="left:115px;top:233.5px;font-size:11px;color:#4a4a4a;letter-spacing:-1.14px;">TOP</div>
<div class="a" style="left:82px;top:253px;width:78px;height:20px;background:#cbcbcb"></div>
<svg style="left:85px;top:255px" width="17" height="17"><rect x="0.600" y="0.600" width="15" height="15" fill="#c9dcf4" stroke="#1f3c70" stroke-width="1.200"/><rect x="2.300" y="2.300" width="11.600" height="11.600" fill="none" stroke="#eef4fc" stroke-width="0.900"/><path d="M5.500 4.500v7h7M5.500 11.500l4.500-4.500" stroke="#1f3c70" stroke-width="1.200" fill="none"/><path d="M5.500 3.500l-1.800 2.500h3.600zM13.300 11.500l-2.500-1.800v3.600z" fill="#1f3c70"/></svg>
<div class="t" style="left:115px;top:257.5px;font-size:11px;color:#4a4a4a;letter-spacing:-0.78px;">FRONT</div>
<div class="a" style="left:82px;top:277px;width:74px;height:20px;background:#cbcbcb"></div>
<svg style="left:85px;top:279px" width="17" height="17"><rect x="0.600" y="0.600" width="15" height="15" fill="#c9dcf4" stroke="#1f3c70" stroke-width="1.200"/><rect x="2.300" y="2.300" width="11.600" height="11.600" fill="none" stroke="#eef4fc" stroke-width="0.900"/><path d="M5.500 4.500v7h7M5.500 11.500l4.500-4.500" stroke="#1f3c70" stroke-width="1.200" fill="none"/><path d="M5.500 3.500l-1.800 2.500h3.600zM13.300 11.500l-2.500-1.800v3.600z" fill="#1f3c70"/></svg>
<div class="t" style="left:115px;top:281.5px;font-size:11px;color:#4a4a4a;letter-spacing:-0.85px;">RIGHT</div>
<div class="a" style="left:82px;top:301px;width:74px;height:20px;background:#5a8fc2"></div>
<svg style="left:85px;top:303px" width="17" height="17"><rect x="0.600" y="0.600" width="15" height="15" fill="#c9dcf4" stroke="#1f3c70" stroke-width="1.200"/><rect x="2.300" y="2.300" width="11.600" height="11.600" fill="none" stroke="#eef4fc" stroke-width="0.900"/><path d="M5.500 4.500v7h7M5.500 11.500l4.500-4.500" stroke="#1f3c70" stroke-width="1.200" fill="none"/><path d="M5.500 3.500l-1.800 2.500h3.600zM13.300 11.500l-2.500-1.800v3.600z" fill="#1f3c70"/></svg>
<div class="t" style="left:115px;top:305.5px;font-size:11px;color:#fff;font-weight:bold;letter-spacing:-0.50px;">HOME</div>
<div class="a" style="left:64px;top:325px;width:90px;height:20px;background:#cbcbcb"></div>
<svg style="left:67px;top:327px" width="16" height="17"><path d="M1.500 0.500h8.500l4 4v9h-12.500z" fill="#f4f4f4" stroke="#555" stroke-width="1"/><path d="M10 0.500v4h4" fill="none" stroke="#555" stroke-width="0.900"/><rect x="0.500" y="12" width="14.500" height="3.500" fill="#f3c436" stroke="#b8860b" stroke-width="0.700"/></svg>
<div class="t" style="left:97px;top:329.5px;font-size:11px;color:#4a4a4a;letter-spacing:-0.39px;">Units: mm</div>
<svg style="left:45px;top:352px" width="12" height="14"><path d="M1 1l9 6-9 6z" fill="#f4f4f4" stroke="#2e2e2e" stroke-width="1.100"/></svg>
<div class="a" style="left:64px;top:349px;width:95px;height:20px;background:#cbcbcb"></div>
<svg style="left:68px;top:350px" width="12" height="18"><path d="M6 2.300a4.900 4.900 0 0 1 2.500 9.100v1.800h-5v-1.800a4.900 4.900 0 0 1 2.500-9.100z" fill="#f7e862" stroke="#9c8a2a" stroke-width="0.900"/><circle cx="4.900" cy="6" r="1.800" fill="#fffcd8"/><path d="M3.800 14.300h4.400M4.300 15.900h3.400" stroke="#6a6a7a" stroke-width="1.100"/></svg>
<svg style="left:92px;top:352px" width="17" height="14"><path d="M0.500 13.500v-12h5.500l1.500 2h8v10z" fill="#eaeaea" stroke="#555" stroke-width="1"/><path d="M0.500 4h15" stroke="#555" stroke-width="0.800" opacity="0.6"/></svg>
<div class="t" style="left:122px;top:353.5px;font-size:11px;color:#4a4a4a;letter-spacing:-0.22px;">Origin</div>
<svg style="left:45px;top:376px" width="12" height="14"><path d="M1 1l9 6-9 6z" fill="#f4f4f4" stroke="#2e2e2e" stroke-width="1.100"/></svg>
<div class="a" style="left:64px;top:373px;width:103px;height:20px;background:#cbcbcb"></div>
<svg style="left:68px;top:374px" width="12" height="18"><path d="M6 2.300a4.900 4.900 0 0 1 2.500 9.100v1.800h-5v-1.800a4.900 4.900 0 0 1 2.500-9.100z" fill="#f7e862" stroke="#9c8a2a" stroke-width="0.900"/><circle cx="4.900" cy="6" r="1.800" fill="#fffcd8"/><path d="M3.800 14.300h4.400M4.300 15.900h3.400" stroke="#6a6a7a" stroke-width="1.100"/></svg>
<svg style="left:92px;top:376px" width="17" height="14"><path d="M0.500 13.500v-12h5.500l1.500 2h8v10z" fill="#eaeaea" stroke="#555" stroke-width="1"/><path d="M0.500 4h15" stroke="#555" stroke-width="0.800" opacity="0.6"/></svg>
<div class="t" style="left:122px;top:377.5px;font-size:11px;color:#4a4a4a;letter-spacing:-0.11px;">Bodies</div>
<svg style="left:44px;top:401px" width="13" height="12"><path d="M0.800 11.200h10.400v-10.400z" fill="#8c8c8c" stroke="#2e2e2e" stroke-width="1"/></svg>
<div class="a" style="left:64px;top:397px;width:115px;height:20px;background:#cbcbcb"></div>
<svg style="left:68px;top:398px" width="12" height="18"><path d="M6 2.300a4.900 4.900 0 0 1 2.500 9.100v1.800h-5v-1.800a4.900 4.900 0 0 1 2.500-9.100z" fill="#d9e5f6" stroke="#6f86ad" stroke-width="0.900"/><circle cx="4.900" cy="6" r="1.800" fill="#ffffff"/><path d="M3.800 14.300h4.400M4.300 15.900h3.400" stroke="#6a6a7a" stroke-width="1.100"/></svg>
<svg style="left:92px;top:400px" width="17" height="14"><path d="M0.500 13.500v-12h5.500l1.500 2h8v10z" fill="#eaeaea" stroke="#555" stroke-width="1"/><path d="M0.500 4h15" stroke="#555" stroke-width="0.800" opacity="0.6"/></svg>
<div class="t" style="left:122px;top:401.5px;font-size:11px;color:#4a4a4a;letter-spacing:-0.03px;">Sketches</div>
<div class="a" style="left:82px;top:421px;width:107px;height:20px;background:#cbcbcb"></div>
<svg style="left:86px;top:422px" width="12" height="18"><path d="M6 2.300a4.900 4.900 0 0 1 2.500 9.100v1.800h-5v-1.800a4.900 4.900 0 0 1 2.500-9.100z" fill="#f7e862" stroke="#9c8a2a" stroke-width="0.900"/><circle cx="4.900" cy="6" r="1.800" fill="#fffcd8"/><path d="M3.800 14.300h4.400M4.300 15.900h3.400" stroke="#6a6a7a" stroke-width="1.100"/></svg>
<svg style="left:109px;top:422px" width="18" height="18"><rect x="1" y="2" width="15" height="15" fill="#f3f6fb" stroke="#222" stroke-width="1.400"/><path d="M4 5v9h9M4 14l6-6" stroke="#2b4e8c" stroke-width="1.300" fill="none"/><path d="M9 9l6.500-7 2 1.800-6.500 7-2.800 1z" fill="#f4d03a" stroke="#7a6514" stroke-width="0.700"/></svg>
<div class="t" style="left:140px;top:425.5px;font-size:11px;color:#4a4a4a;letter-spacing:-0.25px;">Sketch1</div>
<div class="a" style="left:82px;top:445px;width:107px;height:20px;background:#cbcbcb"></div>
<svg style="left:86px;top:446px" width="12" height="18"><path d="M6 2.300a4.900 4.900 0 0 1 2.500 9.100v1.800h-5v-1.800a4.900 4.900 0 0 1 2.500-9.100z" fill="#f7e862" stroke="#9c8a2a" stroke-width="0.900"/><circle cx="4.900" cy="6" r="1.800" fill="#fffcd8"/><path d="M3.800 14.300h4.400M4.300 15.900h3.400" stroke="#6a6a7a" stroke-width="1.100"/></svg>
<svg style="left:109px;top:446px" width="18" height="18"><rect x="1" y="2" width="15" height="15" fill="#f3f6fb" stroke="#222" stroke-width="1.400"/><path d="M4 5v9h9M4 14l6-6" stroke="#2b4e8c" stroke-width="1.300" fill="none"/><path d="M9 9l6.500-7 2 1.800-6.500 7-2.800 1z" fill="#f4d03a" stroke="#7a6514" stroke-width="0.700"/></svg>
<div class="t" style="left:140px;top:449.5px;font-size:11px;color:#4a4a4a;letter-spacing:-0.11px;">Sketch2</div>
<div class="a" style="left:10px;top:787px;width:300px;height:25px;background:#d5d5d5;border:1px solid #b8b8b8"></div>
<div class="t" style="left:37px;top:794px;font-size:11px;color:#585858;letter-spacing:-0.90px;">COMMENTS</div>
<svg style="left:288px;top:794px" width="10" height="10"><circle cx="5" cy="5" r="4.600" fill="#222"/><path d="M2.500 5h5M5 2.500v5" stroke="#ddd" stroke-width="1.300"/></svg>
<div class="a" style="left:304px;top:792px;width:1px;height:14px;background:#8a8a8a"></div><div class="a" style="left:306px;top:794px;width:1px;height:9px;background:#9a9a9a"></div>
<div class="a" style="left:674px;top:788px;width:145px;height:24px;background:#cfcfcf"></div>
<div class="a" style="left:825px;top:788px;width:94px;height:24px;background:#cfcfcf"></div>
<div class="t" style="left:1522px;top:795px;font-size:11px;color:#333;font-weight:bold;letter-spacing:-0.50px;">HOME</div>
<svg style="left:0;top:0" width="1596" height="900" viewBox="0 0 1596 900"><g fill="none" stroke="#333" stroke-width="1.100"><path d="M685 807v-14M682.300 795.500l2.700-3.500 2.700 3.500" /><path d="M685 807v-14" stroke="#f4f4f4" stroke-width="2.600"/><path d="M683.700 807.500v-13h2.600v13z" fill="#f4f4f4"/><path d="M682 798c-6 1-6 5 1 6M688 798c6 1 6 5-2 6"/><path d="M683.500 801.500l-3 2.500 3 2.500z" fill="#333"/></g><path d="M698.5 798.5h5.200l-2.600 3.600z" fill="#2e2e2e"/><g fill="#f2f2f2" stroke="#3a3a3a" stroke-width="1.100"><path d="M710.500 796.500h15.500v11h-15.500z"/><path d="M713 796v-2l3-2 2 1.500 4-1.500v4" fill="none"/><rect x="713.500" y="800" width="9.500" height="4.500" fill="#cfd6e2"/></g><g fill="#f7f7f7" stroke="#333" stroke-width="0.900" stroke-linejoin="round"><path d="M741.500 808.500c-1.500-2.500-4-5-5-8c0.800-1.200 2.400-0.600 3.600 1.400v-6.400c0-1.600 2.100-1.600 2.100 0v3.500v-6c0-1.600 2.100-1.600 2.100 0v5.500v-6.200c0-1.600 2.100-1.600 2.100 0v6.500v-4.600c0-1.500 2-1.500 2 0v8c0 2.500-0.800 4.300-2 6.300z"/><path d="M742.200 799v-1M744.300 798.500v-1M746.400 798.500v-1" fill="none"/></g><g fill="none" stroke="#333"><circle cx="767.500" cy="798.500" r="4.800" fill="#eef1f5" stroke-width="1.300"/><path d="M771 802.500l4.500 4.500" stroke-width="2.400" stroke-linecap="round"/><path d="M773.500 794.500h4M775.500 792.500v4M773.500 798h4" stroke-width="1"/></g><g fill="none" stroke="#333"><circle cx="794.500" cy="798" r="5.600" fill="#f2f2f2" stroke-width="1.400"/><rect x="792" y="795.500" width="5" height="5" stroke-width="0.900"/><path d="M798.800 802.500l4.500 4.500" stroke-width="2.600" stroke-linecap="round"/></g><path d="M809.5 798.5h5.200l-2.600 3.600z" fill="#2e2e2e"/><g><rect x="829.500" y="792.500" width="15" height="11.500" rx="1" fill="#9dbde6" stroke="#444" stroke-width="1.200"/><rect x="831" y="794" width="12" height="8.500" fill="#b9d1ef"/><path d="M834 806.500h6.500l-1-2.500h-4.500z" fill="#e9e9e9" stroke="#666" stroke-width="0.600"/></g><path d="M848 798.5h5.200l-2.600 3.600z" fill="#2e2e2e"/><rect x="860.500" y="792.500" width="15.250" height="15" fill="#f1f1f1"/><path d="M860.50 792.500v15M863.55 792.500v15M866.60 792.500v15M869.65 792.500v15M872.70 792.500v15M875.75 792.500v15M860.500 792.50h15.250M860.500 795.50h15.250M860.500 798.50h15.250M860.500 801.50h15.250M860.500 804.50h15.250M860.500 807.50h15.250" stroke="#4a4a4a" stroke-width="0.900" fill="none"/><path d="M878.5 798.5h5.200l-2.600 3.600z" fill="#2e2e2e"/><g fill="#a9c6ee" stroke="#2f5fa8" stroke-width="1.200"><rect x="891.800" y="793.500" width="6" height="5.500"/><rect x="899.500" y="793.500" width="6" height="5.500"/><rect x="891.800" y="801" width="6" height="5.500"/><rect x="899.500" y="801" width="6" height="5.500"/></g><path d="M909.5 798.5h5.200l-2.600 3.600z" fill="#2e2e2e"/></svg>
<div class="a" style="left:6px;top:816px;width:1582px;height:44px;background:#cdcdcd"></div>
<svg style="left:0;top:0" width="1596" height="900" viewBox="0 0 1596 900"><g fill="#4a4a4a"><rect x="17" y="833" width="2" height="14"/><path d="M29 833v14l-10-7z"/><path d="M51.500 834v12l-9.500-6z"/><rect x="52" y="837" width="2" height="6"/><rect x="66" y="837" width="2" height="6"/><path d="M68.500 834v12l9.500-6z"/><path d="M92 832.500v15l11.500-7.500z"/><path d="M117 833v14l10-7z"/><rect x="127" y="833" width="2" height="14"/></g><g><rect x="152.39999999999998" y="833.7" width="15.200" height="15.200" fill="#dfe8f5" stroke="#111" stroke-width="1.400"/><path d="M155.2 837v8.700h8.700M155.2 845.7l6.500-6.500" stroke="#222" stroke-width="1.400" fill="none"/><path d="M160.7 839l6.500-6.200 2 2-6.500 6.200-2.600 0.700z" fill="#f6dc2a" stroke="#8a7410" stroke-width="0.600"/></g><g stroke="#5a6a86" stroke-width="0.900"><path d="M176.2 836.5l3-3h7.500l-3 3z" fill="#e6eefa"/><path d="M183.7 836.5l3-3v12.500l-3 3z" fill="#8ba6cc"/><rect x="176.2" y="836.5" width="7.500" height="12.500" fill="#b4ccec"/><path d="M190.0 848v-13M187.7 837.5l2.300-3.500 2.300 3.500" fill="none" stroke="#222" stroke-width="1.100"/></g><g stroke="#5a6a86" stroke-width="0.900"><path d="M200.29999999999998 836.5l3-3h7.500l-3 3z" fill="#e6eefa"/><path d="M207.79999999999998 836.5l3-3v12.500l-3 3z" fill="#8ba6cc"/><rect x="200.29999999999998" y="836.5" width="7.500" height="12.500" fill="#b4ccec"/><path d="M214.1 848v-13M211.79999999999998 837.5l2.300-3.500 2.300 3.500" fill="none" stroke="#222" stroke-width="1.100"/></g><g fill="#3f3f3f" stroke="none"><rect x="229.9" y="838.8" width="4.400" height="4.400" fill="#f2f2f2" stroke="#3f3f3f" stroke-width="1"/><path d="M235.29999999999998 841.0L237.6 841.0" stroke="#3f3f3f" stroke-width="1.500"/><path d="M240.29999999999998 841.0L236.9 844.2L236.9 837.8z"/><path d="M228.9 841.0L226.6 841.0" stroke="#3f3f3f" stroke-width="1.500"/><path d="M223.9 841.0L227.29999999999998 837.8L227.29999999999998 844.2z"/><path d="M232.1 844.2L232.1 846.5" stroke="#3f3f3f" stroke-width="1.500"/><path d="M232.1 849.2L228.9 845.8L235.29999999999998 845.8z"/><path d="M232.1 837.8L232.1 835.5" stroke="#3f3f3f" stroke-width="1.500"/><path d="M232.1 832.8L235.29999999999998 836.2L228.9 836.2z"/></g><g><rect x="249.3" y="832.8" width="7" height="8.600" rx="2.600" fill="#f7f7f7" stroke="#444" stroke-width="1"/><rect x="256.90000000000003" y="840.4" width="7.400" height="8.600" rx="2.600" fill="#f7f7f7" stroke="#444" stroke-width="1"/><path d="M258.1 846.5h5v2h-5z" fill="#d8cfc8" opacity="0.6"/><path d="M250.60000000000002 842v3.500h3.500" fill="none" stroke="#2f6fb0" stroke-width="1.600"/><path d="M253.60000000000002 843l2.700 2.500-2.700 2.500z" fill="#2f6fb0"/></g><g fill="#3f3f3f" stroke="none"><rect x="277.90000000000003" y="838.8" width="4.400" height="4.400" fill="#f2f2f2" stroke="#3f3f3f" stroke-width="1"/><path d="M283.3 841.0L285.6 841.0" stroke="#3f3f3f" stroke-width="1.500"/><path d="M288.3 841.0L284.90000000000003 844.2L284.90000000000003 837.8z"/><path d="M276.90000000000003 841.0L274.6 841.0" stroke="#3f3f3f" stroke-width="1.500"/><path d="M271.90000000000003 841.0L275.3 837.8L275.3 844.2z"/><path d="M280.1 844.2L280.1 846.5" stroke="#3f3f3f" stroke-width="1.500"/><path d="M280.1 849.2L276.90000000000003 845.8L283.3 845.8z"/><path d="M280.1 837.8L280.1 835.5" stroke="#3f3f3f" stroke-width="1.500"/><path d="M280.1 832.8L283.3 836.2L276.90000000000003 836.2z"/></g><g><rect x="297.4" y="832.8" width="7" height="8.600" rx="2.600" fill="#f7f7f7" stroke="#444" stroke-width="1"/><rect x="305.0" y="840.4" width="7.400" height="8.600" rx="2.600" fill="#f7f7f7" stroke="#444" stroke-width="1"/><path d="M306.2 846.5h5v2h-5z" fill="#d8cfc8" opacity="0.6"/><path d="M298.7 842v3.500h3.500" fill="none" stroke="#2f6fb0" stroke-width="1.600"/><path d="M301.7 843l2.700 2.500-2.700 2.500z" fill="#2f6fb0"/></g><g fill="#3f3f3f" stroke="none"><rect x="326.0" y="838.8" width="4.400" height="4.400" fill="#f2f2f2" stroke="#3f3f3f" stroke-width="1"/><path d="M331.4 841.0L333.7 841.0" stroke="#3f3f3f" stroke-width="1.500"/><path d="M336.4 841.0L333.0 844.2L333.0 837.8z"/><path d="M325.0 841.0L322.7 841.0" stroke="#3f3f3f" stroke-width="1.500"/><path d="M320.0 841.0L323.4 837.8L323.4 844.2z"/><path d="M328.2 844.2L328.2 846.5" stroke="#3f3f3f" stroke-width="1.500"/><path d="M328.2 849.2L325.0 845.8L331.4 845.8z"/><path d="M328.2 837.8L328.2 835.5" stroke="#3f3f3f" stroke-width="1.500"/><path d="M328.2 832.8L331.4 836.2L325.0 836.2z"/></g><g><rect x="345.4" y="832.8" width="7" height="8.600" rx="2.600" fill="#f7f7f7" stroke="#444" stroke-width="1"/><rect x="353.0" y="840.4" width="7.400" height="8.600" rx="2.600" fill="#f7f7f7" stroke="#444" stroke-width="1"/><path d="M354.2 846.5h5v2h-5z" fill="#d8cfc8" opacity="0.6"/><path d="M346.7 842v3.500h3.500" fill="none" stroke="#2f6fb0" stroke-width="1.600"/><path d="M349.7 843l2.700 2.500-2.700 2.500z" fill="#2f6fb0"/></g><g fill="#3f3f3f" stroke="none"><rect x="374.1" y="838.8" width="4.400" height="4.400" fill="#f2f2f2" stroke="#3f3f3f" stroke-width="1"/><path d="M379.5 841.0L381.8 841.0" stroke="#3f3f3f" stroke-width="1.500"/><path d="M384.5 841.0L381.1 844.2L381.1 837.8z"/><path d="M373.1 841.0L370.8 841.0" stroke="#3f3f3f" stroke-width="1.500"/><path d="M368.1 841.0L371.5 837.8L371.5 844.2z"/><path d="M376.3 844.2L376.3 846.5" stroke="#3f3f3f" stroke-width="1.500"/><path d="M376.3 849.2L373.1 845.8L379.5 845.8z"/><path d="M376.3 837.8L376.3 835.5" stroke="#3f3f3f" stroke-width="1.500"/><path d="M376.3 832.8L379.5 836.2L373.1 836.2z"/></g><g><rect x="392.7" y="833.7" width="15.200" height="15.200" fill="#dfe8f5" stroke="#111" stroke-width="1.400"/><path d="M395.5 837v8.700h8.700M395.5 845.7l6.500-6.500" stroke="#222" stroke-width="1.400" fill="none"/><path d="M401.0 839l6.500-6.200 2 2-6.500 6.200-2.600 0.700z" fill="#f6dc2a" stroke="#8a7410" stroke-width="0.600"/></g><g><rect x="417.5" y="832.8" width="7" height="8.600" rx="2.600" fill="#f7f7f7" stroke="#444" stroke-width="1"/><rect x="425.1" y="840.4" width="7.400" height="8.600" rx="2.600" fill="#f7f7f7" stroke="#444" stroke-width="1"/><path d="M426.3 846.5h5v2h-5z" fill="#d8cfc8" opacity="0.6"/><path d="M418.8 842v3.500h3.500" fill="none" stroke="#2f6fb0" stroke-width="1.600"/><path d="M421.8 843l2.700 2.500-2.700 2.500z" fill="#2f6fb0"/></g><g fill="#3f3f3f" stroke="none"><rect x="446.2" y="838.8" width="4.400" height="4.400" fill="#f2f2f2" stroke="#3f3f3f" stroke-width="1"/><path d="M451.59999999999997 841.0L453.9 841.0" stroke="#3f3f3f" stroke-width="1.500"/><path d="M456.59999999999997 841.0L453.2 844.2L453.2 837.8z"/><path d="M445.2 841.0L442.9 841.0" stroke="#3f3f3f" stroke-width="1.500"/><path d="M440.2 841.0L443.59999999999997 837.8L443.59999999999997 844.2z"/><path d="M448.4 844.2L448.4 846.5" stroke="#3f3f3f" stroke-width="1.500"/><path d="M448.4 849.2L445.2 845.8L451.59999999999997 845.8z"/><path d="M448.4 837.8L448.4 835.5" stroke="#3f3f3f" stroke-width="1.500"/><path d="M448.4 832.8L451.59999999999997 836.2L445.2 836.2z"/></g><g><rect x="465.59999999999997" y="832.8" width="7" height="8.600" rx="2.600" fill="#f7f7f7" stroke="#444" stroke-width="1"/><rect x="473.2" y="840.4" width="7.400" height="8.600" rx="2.600" fill="#f7f7f7" stroke="#444" stroke-width="1"/><path d="M474.4 846.5h5v2h-5z" fill="#d8cfc8" opacity="0.6"/><path d="M466.9 842v3.500h3.500" fill="none" stroke="#2f6fb0" stroke-width="1.600"/><path d="M469.9 843l2.700 2.500-2.700 2.500z" fill="#2f6fb0"/></g><g fill="#3f3f3f" stroke="none"><rect x="494.2" y="838.8" width="4.400" height="4.400" fill="#f2f2f2" stroke="#3f3f3f" stroke-width="1"/><path d="M499.59999999999997 841.0L501.9 841.0" stroke="#3f3f3f" stroke-width="1.500"/><path d="M504.59999999999997 841.0L501.2 844.2L501.2 837.8z"/><path d="M493.2 841.0L490.9 841.0" stroke="#3f3f3f" stroke-width="1.500"/><path d="M488.2 841.0L491.59999999999997 837.8L491.59999999999997 844.2z"/><path d="M496.4 844.2L496.4 846.5" stroke="#3f3f3f" stroke-width="1.500"/><path d="M496.4 849.2L493.2 845.8L499.59999999999997 845.8z"/><path d="M496.4 837.8L496.4 835.5" stroke="#3f3f3f" stroke-width="1.500"/><path d="M496.4 832.8L499.59999999999997 836.2L493.2 836.2z"/></g><g><rect x="513.7" y="832.8" width="7" height="8.600" rx="2.600" fill="#f7f7f7" stroke="#444" stroke-width="1"/><rect x="521.3" y="840.4" width="7.400" height="8.600" rx="2.600" fill="#f7f7f7" stroke="#444" stroke-width="1"/><path d="M522.5 846.5h5v2h-5z" fill="#d8cfc8" opacity="0.6"/><path d="M515.0 842v3.500h3.500" fill="none" stroke="#2f6fb0" stroke-width="1.600"/><path d="M518.0 843l2.700 2.500-2.700 2.500z" fill="#2f6fb0"/></g><g fill="#3f3f3f" stroke="none"><rect x="542.3" y="838.8" width="4.400" height="4.400" fill="#f2f2f2" stroke="#3f3f3f" stroke-width="1"/><path d="M547.7 841.0L550.0 841.0" stroke="#3f3f3f" stroke-width="1.500"/><path d="M552.7 841.0L549.3 844.2L549.3 837.8z"/><path d="M541.3 841.0L539.0 841.0" stroke="#3f3f3f" stroke-width="1.500"/><path d="M536.3 841.0L539.7 837.8L539.7 844.2z"/><path d="M544.5 844.2L544.5 846.5" stroke="#3f3f3f" stroke-width="1.500"/><path d="M544.5 849.2L541.3 845.8L547.7 845.8z"/><path d="M544.5 837.8L544.5 835.5" stroke="#3f3f3f" stroke-width="1.500"/><path d="M544.5 832.8L547.7 836.2L541.3 836.2z"/></g><g><rect x="561.7" y="832.8" width="7" height="8.600" rx="2.600" fill="#f7f7f7" stroke="#444" stroke-width="1"/><rect x="569.3" y="840.4" width="7.400" height="8.600" rx="2.600" fill="#f7f7f7" stroke="#444" stroke-width="1"/><path d="M570.5 846.5h5v2h-5z" fill="#d8cfc8" opacity="0.6"/><path d="M563.0 842v3.500h3.500" fill="none" stroke="#2f6fb0" stroke-width="1.600"/><path d="M566.0 843l2.700 2.500-2.700 2.500z" fill="#2f6fb0"/></g><g fill="#3f3f3f" stroke="none"><rect x="590.3" y="838.8" width="4.400" height="4.400" fill="#f2f2f2" stroke="#3f3f3f" stroke-width="1"/><path d="M595.7 841.0L598.0 841.0" stroke="#3f3f3f" stroke-width="1.500"/><path d="M600.7 841.0L597.3 844.2L597.3 837.8z"/><path d="M589.3 841.0L587.0 841.0" stroke="#3f3f3f" stroke-width="1.500"/><path d="M584.3 841.0L587.7 837.8L587.7 844.2z"/><path d="M592.5 844.2L592.5 846.5" stroke="#3f3f3f" stroke-width="1.500"/><path d="M592.5 849.2L589.3 845.8L595.7 845.8z"/><path d="M592.5 837.8L592.5 835.5" stroke="#3f3f3f" stroke-width="1.500"/><path d="M592.5 832.8L595.7 836.2L589.3 836.2z"/></g><g fill="#3f3f3f" stroke="none"><rect x="614.4" y="838.8" width="4.400" height="4.400" fill="#f2f2f2" stroke="#3f3f3f" stroke-width="1"/><path d="M619.8000000000001 841.0L622.1 841.0" stroke="#3f3f3f" stroke-width="1.500"/><path d="M624.8000000000001 841.0L621.4 844.2L621.4 837.8z"/><path d="M613.4 841.0L611.1 841.0" stroke="#3f3f3f" stroke-width="1.500"/><path d="M608.4 841.0L611.8000000000001 837.8L611.8000000000001 844.2z"/><path d="M616.6 844.2L616.6 846.5" stroke="#3f3f3f" stroke-width="1.500"/><path d="M616.6 849.2L613.4 845.8L619.8000000000001 845.8z"/><path d="M616.6 837.8L616.6 835.5" stroke="#3f3f3f" stroke-width="1.500"/><path d="M616.6 832.8L619.8000000000001 836.2L613.4 836.2z"/></g><g fill="#3f3f3f" stroke="none"><rect x="638.4" y="838.8" width="4.400" height="4.400" fill="#f2f2f2" stroke="#3f3f3f" stroke-width="1"/><path d="M643.8000000000001 841.0L646.1 841.0" stroke="#3f3f3f" stroke-width="1.500"/><path d="M648.8000000000001 841.0L645.4 844.2L645.4 837.8z"/><path d="M637.4 841.0L635.1 841.0" stroke="#3f3f3f" stroke-width="1.500"/><path d="M632.4 841.0L635.8000000000001 837.8L635.8000000000001 844.2z"/><path d="M640.6 844.2L640.6 846.5" stroke="#3f3f3f" stroke-width="1.500"/><path d="M640.6 849.2L637.4 845.8L643.8000000000001 845.8z"/><path d="M640.6 837.8L640.6 835.5" stroke="#3f3f3f" stroke-width="1.500"/><path d="M640.6 832.8L643.8000000000001 836.2L637.4 836.2z"/></g><g><rect x="657.8000000000001" y="832.8" width="7" height="8.600" rx="2.600" fill="#f7f7f7" stroke="#444" stroke-width="1"/><rect x="665.4" y="840.4" width="7.400" height="8.600" rx="2.600" fill="#f7f7f7" stroke="#444" stroke-width="1"/><path d="M666.6 846.5h5v2h-5z" fill="#d8cfc8" opacity="0.6"/><path d="M659.1 842v3.500h3.500" fill="none" stroke="#2f6fb0" stroke-width="1.600"/><path d="M662.1 843l2.700 2.500-2.700 2.500z" fill="#2f6fb0"/></g><g fill="#3f3f3f" stroke="none"><rect x="686.5" y="838.8" width="4.400" height="4.400" fill="#f2f2f2" stroke="#3f3f3f" stroke-width="1"/><path d="M691.9000000000001 841.0L694.2 841.0" stroke="#3f3f3f" stroke-width="1.500"/><path d="M696.9000000000001 841.0L693.5 844.2L693.5 837.8z"/><path d="M685.5 841.0L683.2 841.0" stroke="#3f3f3f" stroke-width="1.500"/><path d="M680.5 841.0L683.9000000000001 837.8L683.9000000000001 844.2z"/><path d="M688.7 844.2L688.7 846.5" stroke="#3f3f3f" stroke-width="1.500"/><path d="M688.7 849.2L685.5 845.8L691.9000000000001 845.8z"/><path d="M688.7 837.8L688.7 835.5" stroke="#3f3f3f" stroke-width="1.500"/><path d="M688.7 832.8L691.9000000000001 836.2L685.5 836.2z"/></g><g><rect x="705.9000000000001" y="832.8" width="7" height="8.600" rx="2.600" fill="#f7f7f7" stroke="#444" stroke-width="1"/><rect x="713.5" y="840.4" width="7.400" height="8.600" rx="2.600" fill="#f7f7f7" stroke="#444" stroke-width="1"/><path d="M714.7 846.5h5v2h-5z" fill="#d8cfc8" opacity="0.6"/><path d="M707.2 842v3.500h3.500" fill="none" stroke="#2f6fb0" stroke-width="1.600"/><path d="M710.2 843l2.700 2.500-2.700 2.500z" fill="#2f6fb0"/></g><g fill="#3f3f3f" stroke="none"><rect x="734.5" y="838.8" width="4.400" height="4.400" fill="#f2f2f2" stroke="#3f3f3f" stroke-width="1"/><path d="M739.9000000000001 841.0L742.2 841.0" stroke="#3f3f3f" stroke-width="1.500"/><path d="M744.9000000000001 841.0L741.5 844.2L741.5 837.8z"/><path d="M733.5 841.0L731.2 841.0" stroke="#3f3f3f" stroke-width="1.500"/><path d="M728.5 841.0L731.9000000000001 837.8L731.9000000000001 844.2z"/><path d="M736.7 844.2L736.7 846.5" stroke="#3f3f3f" stroke-width="1.500"/><path d="M736.7 849.2L733.5 845.8L739.9000000000001 845.8z"/><path d="M736.7 837.8L736.7 835.5" stroke="#3f3f3f" stroke-width="1.500"/><path d="M736.7 832.8L739.9000000000001 836.2L733.5 836.2z"/></g><g><rect x="754.0" y="832.8" width="7" height="8.600" rx="2.600" fill="#f7f7f7" stroke="#444" stroke-width="1"/><rect x="761.5999999999999" y="840.4" width="7.400" height="8.600" rx="2.600" fill="#f7f7f7" stroke="#444" stroke-width="1"/><path d="M762.8 846.5h5v2h-5z" fill="#d8cfc8" opacity="0.6"/><path d="M755.3 842v3.500h3.500" fill="none" stroke="#2f6fb0" stroke-width="1.600"/><path d="M758.3 843l2.700 2.500-2.700 2.500z" fill="#2f6fb0"/></g><g fill="#3f3f3f" stroke="none"><rect x="782.5999999999999" y="838.8" width="4.400" height="4.400" fill="#f2f2f2" stroke="#3f3f3f" stroke-width="1"/><path d="M788.0 841.0L790.3 841.0" stroke="#3f3f3f" stroke-width="1.500"/><path d="M793.0 841.0L789.5999999999999 844.2L789.5999999999999 837.8z"/><path d="M781.5999999999999 841.0L779.3 841.0" stroke="#3f3f3f" stroke-width="1.500"/><path d="M776.5999999999999 841.0L780.0 837.8L780.0 844.2z"/><path d="M784.8 844.2L784.8 846.5" stroke="#3f3f3f" stroke-width="1.500"/><path d="M784.8 849.2L781.5999999999999 845.8L788.0 845.8z"/><path d="M784.8 837.8L784.8 835.5" stroke="#3f3f3f" stroke-width="1.500"/><path d="M784.8 832.8L788.0 836.2L781.5999999999999 836.2z"/></g><path d="M160 857.500H784.800M160.0 853.500v4M184.0 853.500v4M208.1 853.500v4M232.1 853.500v4M256.1 853.500v4M280.1 853.500v4M304.2 853.500v4M328.2 853.500v4M352.2 853.500v4M376.3 853.500v4M400.3 853.500v4M424.3 853.500v4M448.4 853.500v4M472.4 853.500v4M496.4 853.500v4M520.5 853.500v4M544.5 853.500v4M568.5 853.500v4M592.5 853.500v4M616.6 853.500v4M640.6 853.500v4M664.6 853.500v4M688.7 853.500v4M712.7 853.500v4M736.7 853.500v4M760.8 853.500v4M784.8 853.500v4" stroke="#5e5e5e" stroke-width="1.800" fill="none"/><path d="M791 828h10l-3.500 6h-3z" fill="#6e6e6e"/><path d="M796 833v25" stroke="#6e6e6e" stroke-width="1.600"/><g transform="translate(1571 840)" fill="#666"><rect x="-1.700" y="-8" width="3.400" height="4" transform="rotate(0)"/><rect x="-1.700" y="-8" width="3.400" height="4" transform="rotate(45)"/><rect x="-1.700" y="-8" width="3.400" height="4" transform="rotate(90)"/><rect x="-1.700" y="-8" width="3.400" height="4" transform="rotate(135)"/><rect x="-1.700" y="-8" width="3.400" height="4" transform="rotate(180)"/><rect x="-1.700" y="-8" width="3.400" height="4" transform="rotate(225)"/><rect x="-1.700" y="-8" width="3.400" height="4" transform="rotate(270)"/><rect x="-1.700" y="-8" width="3.400" height="4" transform="rotate(315)"/><circle r="5.800"/><circle r="2.600" fill="#cdcdcd"/></g></svg>
<div class="a" style="left:0;top:860px;width:1596px;height:40px;background:#111213"></div>
<div class="a" style="left:0;top:860px;width:1596px;height:5px;background:linear-gradient(90deg,#2b2b2b 0,#2a2a2a 35%,#1d1d1d 60%,#1a1a1a 100%)"></div>
<div class="a" style="left:520px;top:865px;width:780px;height:35px;background:linear-gradient(90deg,#111213,#1a1412 20%,#141516 45%,#0f1114 70%,#141414)"></div>
<div class="a" style="left:341px;top:860px;width:48px;height:38px;background:#363636"></div>
<div class="a" style="left:341px;top:898px;width:48px;height:2px;background:#b2b6ee"></div>
<div class="a" style="left:492px;top:898px;width:40px;height:2px;background:#b2b6ee"></div>
<svg style="left:0;top:0" width="1596" height="900" viewBox="0 0 1596 900"><g fill="#fff"><path d="M13.500 874.300l6.800-0.900v6.300h-6.800zM21.200 873.200l8.800-1.200v7.700h-8.800zM13.500 880.600h6.800v6.300l-6.800-0.900zM21.200 880.600h8.800v7.700l-8.800-1.200z"/></g><g fill="none" stroke="#fff" stroke-width="1.500"><circle cx="72.400" cy="877.300" r="5.300"/><path d="M68.700 881.200l-6 6.200"/></g><g fill="none" stroke="#fff" stroke-width="1.400"><rect x="112.500" y="873" width="11.500" height="14"/><path d="M110.500 875h-2v10h2M126 875h2v10h-2"/></g><g><path d="M158 872h7l2 2h12.500v13.500h-21.500z" fill="#f5d36a"/><path d="M158 875.500h21.500v12h-21.500z" fill="#fbe394"/><path d="M162.500 888v-6.500h12.500v6.500h-3.500v-3.500h-5.500v3.500z" fill="#3a9bdc"/><path d="M158 887h21.500v1.500h-21.500z" fill="#e8b93a"/></g><g><text x="208.500" y="889.500" font-family="Liberation Sans, sans-serif" font-weight="bold" font-size="27" fill="#35b8ee">e</text><path d="M208.500 888c-4-6 3-15 19-18.500c-9 4-16 10-15 17.500z" fill="#f2bb28"/><path d="M227.500 869.500c3 1 2.500 4 0.500 7c0-3-1-5-3.500-5.800z" fill="#f2bb28"/></g><g><circle cx="267" cy="880" r="11" fill="#de4a3c"/><path d="M267 880l-9.600 5.500a11 11 0 0 0 9.600 5.500l5-8.500z" fill="#2f9e4f"/><path d="M267 880l5 2.500-5 8.500a11 11 0 0 0 9.800-16h-9.800z" fill="#f6c92f"/><circle cx="267" cy="880" r="5" fill="#f4f4f4"/><circle cx="267" cy="880" r="4" fill="#4a8af0"/></g><g><circle cx="316" cy="880" r="11.500" fill="#2586c8"/><path d="M306 883c3-2 5-1.500 7 0c2-3 6-4.500 10-3.500c-4 0.500-6 2.500-7.500 5.500c-3-2.500-6-3-9.500-2z" fill="#fff"/><path d="M313 876c1.500-1 2.500-0.800 3.500 0c1-1.500 3-2.200 5-1.700c-2 0.300-3 1.300-3.800 2.800c-1.500-1.200-3-1.500-4.700-1.100z" fill="#fff"/></g><g><rect x="353" y="868" width="24.500" height="24" fill="#e3eff9"/><path d="M360 887.500v-15c0-2 1.500-3 3.500-3h7.500v4h-6.500v3.500h5.500v4h-5.500v6.500z" fill="#ef9232"/><path d="M360 887.500v-15c0-1 0.500-2 1.500-2.500l1.500 2v15z" fill="#c8701c"/><rect x="367.500" y="886" width="8" height="4" rx="1" fill="#2f9ad8"/></g><g><ellipse cx="413.500" cy="877" rx="8.500" ry="7.500" fill="#f6e6ea" stroke="#d84a4a" stroke-width="1.300"/><ellipse cx="410" cy="883" rx="6" ry="4" fill="#a8645e" opacity="0.8"/><path d="M408 871l10 13M418 872l-8 12" stroke="#8a96a8" stroke-width="1.600" fill="none"/><circle cx="419.500" cy="887" r="2.600" fill="none" stroke="#3a9bdc" stroke-width="1.600"/><circle cx="410.500" cy="888" r="2.600" fill="none" stroke="#3a9bdc" stroke-width="1.600"/></g><g><path d="M454 890v-19h2v-3h2.500v3.500l3.500-1.500 3.500 1.500 3-2v-1.500h2.500v3h1.500v19z" fill="none" stroke="#fff" stroke-width="1.500"/><path d="M454 871h2v-3h2.500v3.500l3.500-1.500 3.500 1.500 3-2v-1.500h2.500v3h1.500v5h-18.500z" fill="#fff"/><rect x="456.5" y="883.3" width="2.300" height="2.300" fill="#fff"/><rect x="456.5" y="887.1" width="2.300" height="2.300" fill="#fff"/><rect x="460.4" y="879.5" width="2.300" height="2.300" fill="#fff"/><rect x="460.4" y="883.3" width="2.300" height="2.300" fill="#fff"/><rect x="460.4" y="887.1" width="2.300" height="2.300" fill="#fff"/><rect x="464.3" y="879.5" width="2.300" height="2.300" fill="#fff"/><rect x="464.3" y="883.3" width="2.300" height="2.300" fill="#fff"/><rect x="464.3" y="887.1" width="2.300" height="2.300" fill="#fff"/><rect x="468.2" y="879.5" width="2.300" height="2.300" fill="#fff"/><rect x="468.2" y="883.3" width="2.300" height="2.300" fill="#fff"/><rect x="468.2" y="887.1" width="2.300" height="2.300" fill="#fff"/></g><g><path d="M503 880c0-7 3-10.500 9.500-10.500s9.500 3.500 9.500 10.500-3 10-9.500 10-9.500-3-9.500-10z" fill="#fff" transform="rotate(-12 512.500 880)"/><path d="M510 874.500l-1.500 10.500M515.500 874l-1.500 10.500M507.500 877.800l10.500-1M507 882.300l10.500-1" stroke="#111" stroke-width="1.700" fill="none"/></g><path d="M1357 883l6-6 6 6" fill="none" stroke="#fff" stroke-width="1.200"/><g transform="translate(-1.500 0)" fill="none" stroke="#fff" stroke-width="1.200"><rect x="1392.500" y="876.500" width="11" height="7"/><path d="M1404.500 878.500v3"/><rect x="1394" y="878" width="5" height="4" fill="#fff" stroke="none"/><path d="M1386.500 874.500v3M1389.500 874.500v3M1385.500 877.500h5v2.500l-1.500 1.500v2.500h-2v-2.500l-1.500-1.500z" fill="#fff" stroke-width="0.600"/></g><g><rect x="1419.800" y="873.800" width="21.600" height="12" fill="none" stroke="#fff" stroke-width="1.200"/><rect x="1422.0" y="876.0" width="1.500" height="1.300" fill="#fff"/><rect x="1422.0" y="878.6" width="1.500" height="1.300" fill="#fff"/><rect x="1424.8" y="876.0" width="1.500" height="1.300" fill="#fff"/><rect x="1424.8" y="878.6" width="1.500" height="1.300" fill="#fff"/><rect x="1427.5" y="876.0" width="1.500" height="1.300" fill="#fff"/><rect x="1427.5" y="878.6" width="1.500" height="1.300" fill="#fff"/><rect x="1430.2" y="876.0" width="1.500" height="1.300" fill="#fff"/><rect x="1430.2" y="878.6" width="1.500" height="1.300" fill="#fff"/><rect x="1433.0" y="876.0" width="1.500" height="1.300" fill="#fff"/><rect x="1433.0" y="878.6" width="1.500" height="1.300" fill="#fff"/><rect x="1435.8" y="876.0" width="1.500" height="1.300" fill="#fff"/><rect x="1435.8" y="878.6" width="1.500" height="1.300" fill="#fff"/><rect x="1438.5" y="876.0" width="1.500" height="1.300" fill="#fff"/><rect x="1438.5" y="878.6" width="1.500" height="1.300" fill="#fff"/><rect x="1424" y="882" width="13.500" height="1.300" fill="#fff"/></g><g><path d="M1557 872h16.500v11.500h-9l-3.500 3.500v-3.500h-4z" fill="#fff"/><path d="M1559.500 875.500h11M1559.500 878h11M1559.500 880.500h11" stroke="#111" stroke-width="0.900"/><circle cx="1572.300" cy="887.300" r="8.600" fill="#2b2b2b" stroke="#555" stroke-width="0.800"/></g><path d="M1593.500 860v40" stroke="#555" stroke-width="1"/></svg>
<div class="t" style="left:1458.4px;top:874px;font-size:12px;color:#fff;letter-spacing:-1.23px;">FRA</div>
<div class="t" style="left:1502px;top:865px;font-size:12px;color:#fff;letter-spacing:-0.55px;">08:29</div>
<div class="t" style="left:1494px;top:883px;font-size:12px;color:#fff;letter-spacing:-0.42px;">13-02-17</div>
<div class="t" style="left:1566px;top:882px;font-size:11px;color:#fff;font-weight:bold;letter-spacing:-0.12px;">16</div>
</body></html>
